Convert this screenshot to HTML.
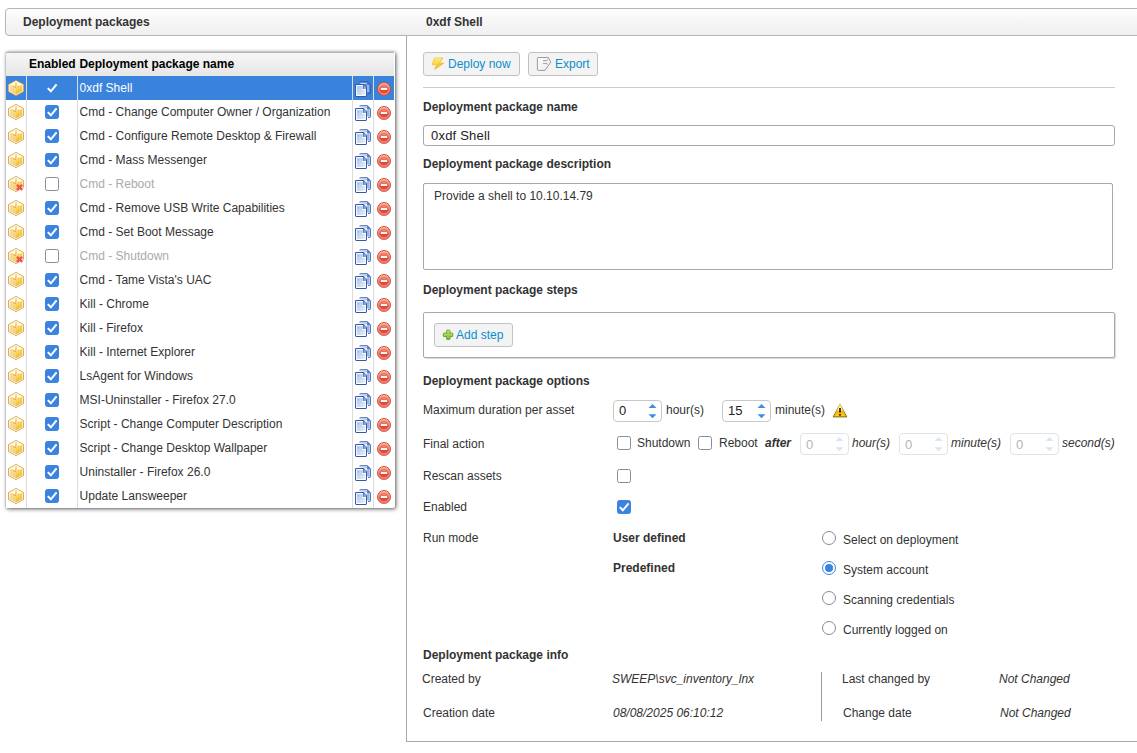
<!DOCTYPE html><html><head><meta charset="utf-8"><style>
html,body{margin:0;padding:0;background:#fff;width:1137px;height:753px;overflow:hidden;position:relative}
body{font-family:"Liberation Sans",sans-serif;font-size:12px;color:#333}
.t{position:absolute;white-space:nowrap;line-height:14px;font-size:12px}
.b{font-weight:bold}.i{font-style:italic}
.h{color:#333}
.lnk{color:#0b8ecb}
#hdr{position:absolute;left:5px;top:8px;width:1140px;height:26px;border:1px solid #b4b4b4;border-radius:4px 0 0 4px;background:linear-gradient(#fdfdfd,#efefef)}
#tbl{position:absolute;left:6px;top:52px;width:389px;height:456px;background:#fff;box-shadow:1px 1px 4px rgba(0,0,0,.6),0 0 2px rgba(0,0,0,.3);border-radius:0 0 2px 0}
#thd{position:absolute;left:0;top:0;width:388px;height:24px;background:linear-gradient(#f6f6f6,#e6e6e6);border-top:1px solid #b4b4b4;box-sizing:border-box}
.row{position:absolute;left:0;width:388px;height:24px}
.row.sel{background:#3a83dc}
.vl{position:absolute;top:24px;width:1px;height:432px;background:#dcdcdc}
.ic{position:absolute;width:16px;height:16px}
.ic svg{display:block}
.chk{position:absolute;width:12px;height:12px;border:1px solid #8a8a98;border-radius:2.5px;background:#fff}
.chk.on{background:#3b83de;border-color:#3b83de}
.chk svg{position:absolute;left:-1px;top:-1px}
.chk.nb svg{left:0;top:0}
#rpl{position:absolute;left:406px;top:36px;width:1px;height:706px;background:#aaa}
#rpb{position:absolute;left:406px;top:741px;width:740px;height:1px;background:#aaa}
.btn{position:absolute;height:22px;border:1px solid #c2c2c2;border-radius:3px;background:#f3f3f3}
.inp{position:absolute;border:1px solid #a9a9a9;border-radius:3px;background:#fff}
.num{position:absolute;width:47px;height:20px;border:1px solid #c8c8c8;border-radius:4px;background:#fff}
.rad{position:absolute;width:12px;height:12px;border:1px solid #8a8a98;border-radius:50%;background:#fff}
.rad.on{border-color:#3b83de}
.rad.on::after{content:"";position:absolute;left:2px;top:2px;width:8px;height:8px;border-radius:50%;background:#3b83de}
</style></head><body><div id="hdr"></div>
<div class="t b h" style="left:23px;top:15px;">Deployment packages</div>
<div class="t b h" style="left:426px;top:15px;">0xdf Shell</div>
<div id="tbl">
<div id="thd"></div>
<div class="t b" style="left:23px;top:5px;color:#000">Enabled</div>
<div class="t b" style="left:73.4px;top:5px;color:#000">Deployment package name</div>
<div class="row sel" style="top:24px">
<div class="ic" style="left:2px;top:4px"><svg width="16" height="16" viewBox="0 0 16 16"><defs><linearGradient id="bxl" x1="0" y1="0" x2="0.3" y2="1"><stop offset="0" stop-color="#fdf0c6"/><stop offset="1" stop-color="#f2cb6c"/></linearGradient><linearGradient id="bxr" x1="0" y1="0" x2="0.2" y2="1"><stop offset="0" stop-color="#fbe6a0"/><stop offset="0.35" stop-color="#f8d35e"/><stop offset="1" stop-color="#ecb334"/></linearGradient><linearGradient id="bxf" x1="0" y1="0" x2="1" y2="0"><stop offset="0" stop-color="#f6dc9a"/><stop offset="1" stop-color="#e2ad48"/></linearGradient></defs>
<path d="M8 0.5 L15.5 4.5 L15.5 11.6 L8 15.5 L0.5 11.6 L0.5 4.5 Z" fill="url(#bxl)" stroke="#d6a140" stroke-width="0.95"/>
<path d="M8 6.4 L14.6 5.1 L14.6 11.1 L8 14.6 Z" fill="url(#bxr)"/>
<path d="M1.5 4.9 L8 1.4 L14.5 4.9 L8 6.5 Z" fill="#fff6dc"/>
<path d="M2.8 5 L8 6.5 L8 8.2 L3.2 6.4 Z" fill="url(#bxf)" opacity="0.9"/>
<path d="M9 6.3 L14.4 5.2 L14.4 6.2 L9 7.3 Z" fill="#f1c050" opacity="0.6"/>
<path d="M8 2.6 L8 6.6" stroke="#d9a646" stroke-width="0.9"/>
<path d="M8 1.35 L14.7 4.95 L14.7 11.15 L8 14.65 L1.3 11.15 L1.3 4.95 Z" fill="none" stroke="#fffaf0" stroke-width="0.7" opacity="0.95"/>
</svg></div>
<div class="chk nb" style="left:39px;top:5px;background:none;border:none"><svg width="14" height="14" viewBox="0 0 14 14"><path d="M2.8 7.1 L5.9 10.3 L11.6 3.3" stroke="#fff" stroke-width="2" fill="none"/></svg></div>
<div class="t" style="left:73.6px;top:5px;color:#fff">0xdf Shell</div>
<div class="ic" style="left:349px;top:5px"><svg width="16" height="16" viewBox="0 0 16 16"><defs><linearGradient id="cpg" x1="0" y1="0" x2="1" y2="1"><stop offset="0" stop-color="#a8c4ec"/><stop offset="1" stop-color="#e8f0fb"/></linearGradient><linearGradient id="cpb" x1="0" y1="0" x2="1" y2="0"><stop offset="0" stop-color="#dbe7f8"/><stop offset="1" stop-color="#8fb0e0"/></linearGradient></defs>
<path d="M4.7 1.6 Q4.7 0.8 5.5 0.8 L12.3 0.8 L15.3 3.8 L15.3 11.6 Q15.3 12.3 14.6 12.3 L13 12.3" fill="none" stroke="#3458aa" stroke-width="1.05" stroke-linejoin="round"/>
<path d="M5.5 1.8 L12 1.8 L14.3 4.1 L14.3 11.3 L11.9 11.3 L11.9 3.3 L5.5 3.3 Z" fill="url(#cpb)"/>
<path d="M12.2 1 L12.2 3.9 L15.1 3.9 Z" fill="#4f76c0"/>
<path d="M1.4 3.5 L8.5 3.5 L11.5 6.5 L11.5 14.5 Q11.5 15.4 10.6 15.4 L1.4 15.4 Q0.5 15.4 0.5 14.5 L0.5 4.4 Q0.5 3.5 1.4 3.5 Z" fill="#fff" stroke="#3458aa" stroke-width="1.05" stroke-linejoin="round"/>
<path d="M1.9 5 L7.5 5 L7.5 8.7 L10.1 8.7 L10.1 14 L1.9 14 Z" fill="url(#cpg)"/>
<path d="M8.7 4 L11 6.3 L11 7.9 L8.7 7.9 Z" fill="#8aaadc"/>
<path d="M8.35 3.6 L8.35 7.9" stroke="#3458aa" stroke-width="0.9"/>
</svg></div>
<div class="ic" style="left:370px;top:5px"><svg width="16" height="16" viewBox="0 0 16 16"><defs><linearGradient id="dlg" x1="0" y1="0" x2="0" y2="1"><stop offset="0" stop-color="#f7a08e"/><stop offset="0.45" stop-color="#ea6450"/><stop offset="0.6" stop-color="#e24836"/><stop offset="1" stop-color="#e65a48"/></linearGradient></defs>
<circle cx="8" cy="7.95" r="6.5" fill="url(#dlg)" stroke="#cf4636" stroke-width="0.9"/>
<circle cx="8" cy="7.95" r="5.3" fill="none" stroke="#ffd2c6" stroke-width="0.75" opacity="0.85"/>
<rect x="4.9" y="6.95" width="6.2" height="2.05" fill="#fff"/>
</svg></div>
</div>
<div class="row" style="top:48px">
<div class="ic" style="left:2px;top:4px"><svg width="16" height="16" viewBox="0 0 16 16"><defs><linearGradient id="bxl" x1="0" y1="0" x2="0.3" y2="1"><stop offset="0" stop-color="#fdf0c6"/><stop offset="1" stop-color="#f2cb6c"/></linearGradient><linearGradient id="bxr" x1="0" y1="0" x2="0.2" y2="1"><stop offset="0" stop-color="#fbe6a0"/><stop offset="0.35" stop-color="#f8d35e"/><stop offset="1" stop-color="#ecb334"/></linearGradient><linearGradient id="bxf" x1="0" y1="0" x2="1" y2="0"><stop offset="0" stop-color="#f6dc9a"/><stop offset="1" stop-color="#e2ad48"/></linearGradient></defs>
<path d="M8 0.5 L15.5 4.5 L15.5 11.6 L8 15.5 L0.5 11.6 L0.5 4.5 Z" fill="url(#bxl)" stroke="#d6a140" stroke-width="0.95"/>
<path d="M8 6.4 L14.6 5.1 L14.6 11.1 L8 14.6 Z" fill="url(#bxr)"/>
<path d="M1.5 4.9 L8 1.4 L14.5 4.9 L8 6.5 Z" fill="#fff6dc"/>
<path d="M2.8 5 L8 6.5 L8 8.2 L3.2 6.4 Z" fill="url(#bxf)" opacity="0.9"/>
<path d="M9 6.3 L14.4 5.2 L14.4 6.2 L9 7.3 Z" fill="#f1c050" opacity="0.6"/>
<path d="M8 2.6 L8 6.6" stroke="#d9a646" stroke-width="0.9"/>
<path d="M8 1.35 L14.7 4.95 L14.7 11.15 L8 14.65 L1.3 11.15 L1.3 4.95 Z" fill="none" stroke="#fffaf0" stroke-width="0.7" opacity="0.95"/>
</svg></div>
<div class="chk on" style="left:39px;top:5px"><svg width="14" height="14" viewBox="0 0 14 14"><path d="M2.8 7.1 L5.9 10.3 L11.6 3.3" stroke="#fff" stroke-width="2" fill="none"/></svg></div>
<div class="t" style="left:73.6px;top:5px;color:#333">Cmd - Change Computer Owner / Organization</div>
<div class="ic" style="left:349px;top:5px"><svg width="16" height="16" viewBox="0 0 16 16"><defs><linearGradient id="cpg" x1="0" y1="0" x2="1" y2="1"><stop offset="0" stop-color="#a8c4ec"/><stop offset="1" stop-color="#e8f0fb"/></linearGradient><linearGradient id="cpb" x1="0" y1="0" x2="1" y2="0"><stop offset="0" stop-color="#dbe7f8"/><stop offset="1" stop-color="#8fb0e0"/></linearGradient></defs>
<path d="M4.7 1.6 Q4.7 0.8 5.5 0.8 L12.3 0.8 L15.3 3.8 L15.3 11.6 Q15.3 12.3 14.6 12.3 L13 12.3" fill="none" stroke="#3458aa" stroke-width="1.05" stroke-linejoin="round"/>
<path d="M5.5 1.8 L12 1.8 L14.3 4.1 L14.3 11.3 L11.9 11.3 L11.9 3.3 L5.5 3.3 Z" fill="url(#cpb)"/>
<path d="M12.2 1 L12.2 3.9 L15.1 3.9 Z" fill="#4f76c0"/>
<path d="M1.4 3.5 L8.5 3.5 L11.5 6.5 L11.5 14.5 Q11.5 15.4 10.6 15.4 L1.4 15.4 Q0.5 15.4 0.5 14.5 L0.5 4.4 Q0.5 3.5 1.4 3.5 Z" fill="#fff" stroke="#3458aa" stroke-width="1.05" stroke-linejoin="round"/>
<path d="M1.9 5 L7.5 5 L7.5 8.7 L10.1 8.7 L10.1 14 L1.9 14 Z" fill="url(#cpg)"/>
<path d="M8.7 4 L11 6.3 L11 7.9 L8.7 7.9 Z" fill="#8aaadc"/>
<path d="M8.35 3.6 L8.35 7.9" stroke="#3458aa" stroke-width="0.9"/>
</svg></div>
<div class="ic" style="left:370px;top:5px"><svg width="16" height="16" viewBox="0 0 16 16"><defs><linearGradient id="dlg" x1="0" y1="0" x2="0" y2="1"><stop offset="0" stop-color="#f7a08e"/><stop offset="0.45" stop-color="#ea6450"/><stop offset="0.6" stop-color="#e24836"/><stop offset="1" stop-color="#e65a48"/></linearGradient></defs>
<circle cx="8" cy="7.95" r="6.5" fill="url(#dlg)" stroke="#cf4636" stroke-width="0.9"/>
<circle cx="8" cy="7.95" r="5.3" fill="none" stroke="#ffd2c6" stroke-width="0.75" opacity="0.85"/>
<rect x="4.9" y="6.95" width="6.2" height="2.05" fill="#fff"/>
</svg></div>
</div>
<div class="row" style="top:72px">
<div class="ic" style="left:2px;top:4px"><svg width="16" height="16" viewBox="0 0 16 16"><defs><linearGradient id="bxl" x1="0" y1="0" x2="0.3" y2="1"><stop offset="0" stop-color="#fdf0c6"/><stop offset="1" stop-color="#f2cb6c"/></linearGradient><linearGradient id="bxr" x1="0" y1="0" x2="0.2" y2="1"><stop offset="0" stop-color="#fbe6a0"/><stop offset="0.35" stop-color="#f8d35e"/><stop offset="1" stop-color="#ecb334"/></linearGradient><linearGradient id="bxf" x1="0" y1="0" x2="1" y2="0"><stop offset="0" stop-color="#f6dc9a"/><stop offset="1" stop-color="#e2ad48"/></linearGradient></defs>
<path d="M8 0.5 L15.5 4.5 L15.5 11.6 L8 15.5 L0.5 11.6 L0.5 4.5 Z" fill="url(#bxl)" stroke="#d6a140" stroke-width="0.95"/>
<path d="M8 6.4 L14.6 5.1 L14.6 11.1 L8 14.6 Z" fill="url(#bxr)"/>
<path d="M1.5 4.9 L8 1.4 L14.5 4.9 L8 6.5 Z" fill="#fff6dc"/>
<path d="M2.8 5 L8 6.5 L8 8.2 L3.2 6.4 Z" fill="url(#bxf)" opacity="0.9"/>
<path d="M9 6.3 L14.4 5.2 L14.4 6.2 L9 7.3 Z" fill="#f1c050" opacity="0.6"/>
<path d="M8 2.6 L8 6.6" stroke="#d9a646" stroke-width="0.9"/>
<path d="M8 1.35 L14.7 4.95 L14.7 11.15 L8 14.65 L1.3 11.15 L1.3 4.95 Z" fill="none" stroke="#fffaf0" stroke-width="0.7" opacity="0.95"/>
</svg></div>
<div class="chk on" style="left:39px;top:5px"><svg width="14" height="14" viewBox="0 0 14 14"><path d="M2.8 7.1 L5.9 10.3 L11.6 3.3" stroke="#fff" stroke-width="2" fill="none"/></svg></div>
<div class="t" style="left:73.6px;top:5px;color:#333">Cmd - Configure Remote Desktop &amp; Firewall</div>
<div class="ic" style="left:349px;top:5px"><svg width="16" height="16" viewBox="0 0 16 16"><defs><linearGradient id="cpg" x1="0" y1="0" x2="1" y2="1"><stop offset="0" stop-color="#a8c4ec"/><stop offset="1" stop-color="#e8f0fb"/></linearGradient><linearGradient id="cpb" x1="0" y1="0" x2="1" y2="0"><stop offset="0" stop-color="#dbe7f8"/><stop offset="1" stop-color="#8fb0e0"/></linearGradient></defs>
<path d="M4.7 1.6 Q4.7 0.8 5.5 0.8 L12.3 0.8 L15.3 3.8 L15.3 11.6 Q15.3 12.3 14.6 12.3 L13 12.3" fill="none" stroke="#3458aa" stroke-width="1.05" stroke-linejoin="round"/>
<path d="M5.5 1.8 L12 1.8 L14.3 4.1 L14.3 11.3 L11.9 11.3 L11.9 3.3 L5.5 3.3 Z" fill="url(#cpb)"/>
<path d="M12.2 1 L12.2 3.9 L15.1 3.9 Z" fill="#4f76c0"/>
<path d="M1.4 3.5 L8.5 3.5 L11.5 6.5 L11.5 14.5 Q11.5 15.4 10.6 15.4 L1.4 15.4 Q0.5 15.4 0.5 14.5 L0.5 4.4 Q0.5 3.5 1.4 3.5 Z" fill="#fff" stroke="#3458aa" stroke-width="1.05" stroke-linejoin="round"/>
<path d="M1.9 5 L7.5 5 L7.5 8.7 L10.1 8.7 L10.1 14 L1.9 14 Z" fill="url(#cpg)"/>
<path d="M8.7 4 L11 6.3 L11 7.9 L8.7 7.9 Z" fill="#8aaadc"/>
<path d="M8.35 3.6 L8.35 7.9" stroke="#3458aa" stroke-width="0.9"/>
</svg></div>
<div class="ic" style="left:370px;top:5px"><svg width="16" height="16" viewBox="0 0 16 16"><defs><linearGradient id="dlg" x1="0" y1="0" x2="0" y2="1"><stop offset="0" stop-color="#f7a08e"/><stop offset="0.45" stop-color="#ea6450"/><stop offset="0.6" stop-color="#e24836"/><stop offset="1" stop-color="#e65a48"/></linearGradient></defs>
<circle cx="8" cy="7.95" r="6.5" fill="url(#dlg)" stroke="#cf4636" stroke-width="0.9"/>
<circle cx="8" cy="7.95" r="5.3" fill="none" stroke="#ffd2c6" stroke-width="0.75" opacity="0.85"/>
<rect x="4.9" y="6.95" width="6.2" height="2.05" fill="#fff"/>
</svg></div>
</div>
<div class="row" style="top:96px">
<div class="ic" style="left:2px;top:4px"><svg width="16" height="16" viewBox="0 0 16 16"><defs><linearGradient id="bxl" x1="0" y1="0" x2="0.3" y2="1"><stop offset="0" stop-color="#fdf0c6"/><stop offset="1" stop-color="#f2cb6c"/></linearGradient><linearGradient id="bxr" x1="0" y1="0" x2="0.2" y2="1"><stop offset="0" stop-color="#fbe6a0"/><stop offset="0.35" stop-color="#f8d35e"/><stop offset="1" stop-color="#ecb334"/></linearGradient><linearGradient id="bxf" x1="0" y1="0" x2="1" y2="0"><stop offset="0" stop-color="#f6dc9a"/><stop offset="1" stop-color="#e2ad48"/></linearGradient></defs>
<path d="M8 0.5 L15.5 4.5 L15.5 11.6 L8 15.5 L0.5 11.6 L0.5 4.5 Z" fill="url(#bxl)" stroke="#d6a140" stroke-width="0.95"/>
<path d="M8 6.4 L14.6 5.1 L14.6 11.1 L8 14.6 Z" fill="url(#bxr)"/>
<path d="M1.5 4.9 L8 1.4 L14.5 4.9 L8 6.5 Z" fill="#fff6dc"/>
<path d="M2.8 5 L8 6.5 L8 8.2 L3.2 6.4 Z" fill="url(#bxf)" opacity="0.9"/>
<path d="M9 6.3 L14.4 5.2 L14.4 6.2 L9 7.3 Z" fill="#f1c050" opacity="0.6"/>
<path d="M8 2.6 L8 6.6" stroke="#d9a646" stroke-width="0.9"/>
<path d="M8 1.35 L14.7 4.95 L14.7 11.15 L8 14.65 L1.3 11.15 L1.3 4.95 Z" fill="none" stroke="#fffaf0" stroke-width="0.7" opacity="0.95"/>
</svg></div>
<div class="chk on" style="left:39px;top:5px"><svg width="14" height="14" viewBox="0 0 14 14"><path d="M2.8 7.1 L5.9 10.3 L11.6 3.3" stroke="#fff" stroke-width="2" fill="none"/></svg></div>
<div class="t" style="left:73.6px;top:5px;color:#333">Cmd - Mass Messenger</div>
<div class="ic" style="left:349px;top:5px"><svg width="16" height="16" viewBox="0 0 16 16"><defs><linearGradient id="cpg" x1="0" y1="0" x2="1" y2="1"><stop offset="0" stop-color="#a8c4ec"/><stop offset="1" stop-color="#e8f0fb"/></linearGradient><linearGradient id="cpb" x1="0" y1="0" x2="1" y2="0"><stop offset="0" stop-color="#dbe7f8"/><stop offset="1" stop-color="#8fb0e0"/></linearGradient></defs>
<path d="M4.7 1.6 Q4.7 0.8 5.5 0.8 L12.3 0.8 L15.3 3.8 L15.3 11.6 Q15.3 12.3 14.6 12.3 L13 12.3" fill="none" stroke="#3458aa" stroke-width="1.05" stroke-linejoin="round"/>
<path d="M5.5 1.8 L12 1.8 L14.3 4.1 L14.3 11.3 L11.9 11.3 L11.9 3.3 L5.5 3.3 Z" fill="url(#cpb)"/>
<path d="M12.2 1 L12.2 3.9 L15.1 3.9 Z" fill="#4f76c0"/>
<path d="M1.4 3.5 L8.5 3.5 L11.5 6.5 L11.5 14.5 Q11.5 15.4 10.6 15.4 L1.4 15.4 Q0.5 15.4 0.5 14.5 L0.5 4.4 Q0.5 3.5 1.4 3.5 Z" fill="#fff" stroke="#3458aa" stroke-width="1.05" stroke-linejoin="round"/>
<path d="M1.9 5 L7.5 5 L7.5 8.7 L10.1 8.7 L10.1 14 L1.9 14 Z" fill="url(#cpg)"/>
<path d="M8.7 4 L11 6.3 L11 7.9 L8.7 7.9 Z" fill="#8aaadc"/>
<path d="M8.35 3.6 L8.35 7.9" stroke="#3458aa" stroke-width="0.9"/>
</svg></div>
<div class="ic" style="left:370px;top:5px"><svg width="16" height="16" viewBox="0 0 16 16"><defs><linearGradient id="dlg" x1="0" y1="0" x2="0" y2="1"><stop offset="0" stop-color="#f7a08e"/><stop offset="0.45" stop-color="#ea6450"/><stop offset="0.6" stop-color="#e24836"/><stop offset="1" stop-color="#e65a48"/></linearGradient></defs>
<circle cx="8" cy="7.95" r="6.5" fill="url(#dlg)" stroke="#cf4636" stroke-width="0.9"/>
<circle cx="8" cy="7.95" r="5.3" fill="none" stroke="#ffd2c6" stroke-width="0.75" opacity="0.85"/>
<rect x="4.9" y="6.95" width="6.2" height="2.05" fill="#fff"/>
</svg></div>
</div>
<div class="row" style="top:120px">
<div class="ic" style="left:2px;top:4px"><svg width="16" height="16" viewBox="0 0 16 16"><defs><linearGradient id="bxl" x1="0" y1="0" x2="0.3" y2="1"><stop offset="0" stop-color="#fdf0c6"/><stop offset="1" stop-color="#f2cb6c"/></linearGradient><linearGradient id="bxr" x1="0" y1="0" x2="0.2" y2="1"><stop offset="0" stop-color="#fbe6a0"/><stop offset="0.35" stop-color="#f8d35e"/><stop offset="1" stop-color="#ecb334"/></linearGradient><linearGradient id="bxf" x1="0" y1="0" x2="1" y2="0"><stop offset="0" stop-color="#f6dc9a"/><stop offset="1" stop-color="#e2ad48"/></linearGradient></defs>
<path d="M8 0.5 L15.5 4.5 L15.5 11.6 L8 15.5 L0.5 11.6 L0.5 4.5 Z" fill="url(#bxl)" stroke="#d6a140" stroke-width="0.95"/>
<path d="M8 6.4 L14.6 5.1 L14.6 11.1 L8 14.6 Z" fill="url(#bxr)"/>
<path d="M1.5 4.9 L8 1.4 L14.5 4.9 L8 6.5 Z" fill="#fff6dc"/>
<path d="M2.8 5 L8 6.5 L8 8.2 L3.2 6.4 Z" fill="url(#bxf)" opacity="0.9"/>
<path d="M9 6.3 L14.4 5.2 L14.4 6.2 L9 7.3 Z" fill="#f1c050" opacity="0.6"/>
<path d="M8 2.6 L8 6.6" stroke="#d9a646" stroke-width="0.9"/>
<path d="M8 1.35 L14.7 4.95 L14.7 11.15 L8 14.65 L1.3 11.15 L1.3 4.95 Z" fill="none" stroke="#fffaf0" stroke-width="0.7" opacity="0.95"/>
</svg><svg width="16" height="16" viewBox="0 0 16 16" style="position:absolute;left:0;top:0"><path d="M9 8.8 L14.2 14 M14.2 8.8 L9 14" stroke="#f04a5a" stroke-width="2"/></svg></div>
<div class="chk" style="left:39px;top:5px"></div>
<div class="t" style="left:73.6px;top:5px;color:#aaa">Cmd - Reboot</div>
<div class="ic" style="left:349px;top:5px"><svg width="16" height="16" viewBox="0 0 16 16"><defs><linearGradient id="cpg" x1="0" y1="0" x2="1" y2="1"><stop offset="0" stop-color="#a8c4ec"/><stop offset="1" stop-color="#e8f0fb"/></linearGradient><linearGradient id="cpb" x1="0" y1="0" x2="1" y2="0"><stop offset="0" stop-color="#dbe7f8"/><stop offset="1" stop-color="#8fb0e0"/></linearGradient></defs>
<path d="M4.7 1.6 Q4.7 0.8 5.5 0.8 L12.3 0.8 L15.3 3.8 L15.3 11.6 Q15.3 12.3 14.6 12.3 L13 12.3" fill="none" stroke="#3458aa" stroke-width="1.05" stroke-linejoin="round"/>
<path d="M5.5 1.8 L12 1.8 L14.3 4.1 L14.3 11.3 L11.9 11.3 L11.9 3.3 L5.5 3.3 Z" fill="url(#cpb)"/>
<path d="M12.2 1 L12.2 3.9 L15.1 3.9 Z" fill="#4f76c0"/>
<path d="M1.4 3.5 L8.5 3.5 L11.5 6.5 L11.5 14.5 Q11.5 15.4 10.6 15.4 L1.4 15.4 Q0.5 15.4 0.5 14.5 L0.5 4.4 Q0.5 3.5 1.4 3.5 Z" fill="#fff" stroke="#3458aa" stroke-width="1.05" stroke-linejoin="round"/>
<path d="M1.9 5 L7.5 5 L7.5 8.7 L10.1 8.7 L10.1 14 L1.9 14 Z" fill="url(#cpg)"/>
<path d="M8.7 4 L11 6.3 L11 7.9 L8.7 7.9 Z" fill="#8aaadc"/>
<path d="M8.35 3.6 L8.35 7.9" stroke="#3458aa" stroke-width="0.9"/>
</svg></div>
<div class="ic" style="left:370px;top:5px"><svg width="16" height="16" viewBox="0 0 16 16"><defs><linearGradient id="dlg" x1="0" y1="0" x2="0" y2="1"><stop offset="0" stop-color="#f7a08e"/><stop offset="0.45" stop-color="#ea6450"/><stop offset="0.6" stop-color="#e24836"/><stop offset="1" stop-color="#e65a48"/></linearGradient></defs>
<circle cx="8" cy="7.95" r="6.5" fill="url(#dlg)" stroke="#cf4636" stroke-width="0.9"/>
<circle cx="8" cy="7.95" r="5.3" fill="none" stroke="#ffd2c6" stroke-width="0.75" opacity="0.85"/>
<rect x="4.9" y="6.95" width="6.2" height="2.05" fill="#fff"/>
</svg></div>
</div>
<div class="row" style="top:144px">
<div class="ic" style="left:2px;top:4px"><svg width="16" height="16" viewBox="0 0 16 16"><defs><linearGradient id="bxl" x1="0" y1="0" x2="0.3" y2="1"><stop offset="0" stop-color="#fdf0c6"/><stop offset="1" stop-color="#f2cb6c"/></linearGradient><linearGradient id="bxr" x1="0" y1="0" x2="0.2" y2="1"><stop offset="0" stop-color="#fbe6a0"/><stop offset="0.35" stop-color="#f8d35e"/><stop offset="1" stop-color="#ecb334"/></linearGradient><linearGradient id="bxf" x1="0" y1="0" x2="1" y2="0"><stop offset="0" stop-color="#f6dc9a"/><stop offset="1" stop-color="#e2ad48"/></linearGradient></defs>
<path d="M8 0.5 L15.5 4.5 L15.5 11.6 L8 15.5 L0.5 11.6 L0.5 4.5 Z" fill="url(#bxl)" stroke="#d6a140" stroke-width="0.95"/>
<path d="M8 6.4 L14.6 5.1 L14.6 11.1 L8 14.6 Z" fill="url(#bxr)"/>
<path d="M1.5 4.9 L8 1.4 L14.5 4.9 L8 6.5 Z" fill="#fff6dc"/>
<path d="M2.8 5 L8 6.5 L8 8.2 L3.2 6.4 Z" fill="url(#bxf)" opacity="0.9"/>
<path d="M9 6.3 L14.4 5.2 L14.4 6.2 L9 7.3 Z" fill="#f1c050" opacity="0.6"/>
<path d="M8 2.6 L8 6.6" stroke="#d9a646" stroke-width="0.9"/>
<path d="M8 1.35 L14.7 4.95 L14.7 11.15 L8 14.65 L1.3 11.15 L1.3 4.95 Z" fill="none" stroke="#fffaf0" stroke-width="0.7" opacity="0.95"/>
</svg></div>
<div class="chk on" style="left:39px;top:5px"><svg width="14" height="14" viewBox="0 0 14 14"><path d="M2.8 7.1 L5.9 10.3 L11.6 3.3" stroke="#fff" stroke-width="2" fill="none"/></svg></div>
<div class="t" style="left:73.6px;top:5px;color:#333">Cmd - Remove USB Write Capabilities</div>
<div class="ic" style="left:349px;top:5px"><svg width="16" height="16" viewBox="0 0 16 16"><defs><linearGradient id="cpg" x1="0" y1="0" x2="1" y2="1"><stop offset="0" stop-color="#a8c4ec"/><stop offset="1" stop-color="#e8f0fb"/></linearGradient><linearGradient id="cpb" x1="0" y1="0" x2="1" y2="0"><stop offset="0" stop-color="#dbe7f8"/><stop offset="1" stop-color="#8fb0e0"/></linearGradient></defs>
<path d="M4.7 1.6 Q4.7 0.8 5.5 0.8 L12.3 0.8 L15.3 3.8 L15.3 11.6 Q15.3 12.3 14.6 12.3 L13 12.3" fill="none" stroke="#3458aa" stroke-width="1.05" stroke-linejoin="round"/>
<path d="M5.5 1.8 L12 1.8 L14.3 4.1 L14.3 11.3 L11.9 11.3 L11.9 3.3 L5.5 3.3 Z" fill="url(#cpb)"/>
<path d="M12.2 1 L12.2 3.9 L15.1 3.9 Z" fill="#4f76c0"/>
<path d="M1.4 3.5 L8.5 3.5 L11.5 6.5 L11.5 14.5 Q11.5 15.4 10.6 15.4 L1.4 15.4 Q0.5 15.4 0.5 14.5 L0.5 4.4 Q0.5 3.5 1.4 3.5 Z" fill="#fff" stroke="#3458aa" stroke-width="1.05" stroke-linejoin="round"/>
<path d="M1.9 5 L7.5 5 L7.5 8.7 L10.1 8.7 L10.1 14 L1.9 14 Z" fill="url(#cpg)"/>
<path d="M8.7 4 L11 6.3 L11 7.9 L8.7 7.9 Z" fill="#8aaadc"/>
<path d="M8.35 3.6 L8.35 7.9" stroke="#3458aa" stroke-width="0.9"/>
</svg></div>
<div class="ic" style="left:370px;top:5px"><svg width="16" height="16" viewBox="0 0 16 16"><defs><linearGradient id="dlg" x1="0" y1="0" x2="0" y2="1"><stop offset="0" stop-color="#f7a08e"/><stop offset="0.45" stop-color="#ea6450"/><stop offset="0.6" stop-color="#e24836"/><stop offset="1" stop-color="#e65a48"/></linearGradient></defs>
<circle cx="8" cy="7.95" r="6.5" fill="url(#dlg)" stroke="#cf4636" stroke-width="0.9"/>
<circle cx="8" cy="7.95" r="5.3" fill="none" stroke="#ffd2c6" stroke-width="0.75" opacity="0.85"/>
<rect x="4.9" y="6.95" width="6.2" height="2.05" fill="#fff"/>
</svg></div>
</div>
<div class="row" style="top:168px">
<div class="ic" style="left:2px;top:4px"><svg width="16" height="16" viewBox="0 0 16 16"><defs><linearGradient id="bxl" x1="0" y1="0" x2="0.3" y2="1"><stop offset="0" stop-color="#fdf0c6"/><stop offset="1" stop-color="#f2cb6c"/></linearGradient><linearGradient id="bxr" x1="0" y1="0" x2="0.2" y2="1"><stop offset="0" stop-color="#fbe6a0"/><stop offset="0.35" stop-color="#f8d35e"/><stop offset="1" stop-color="#ecb334"/></linearGradient><linearGradient id="bxf" x1="0" y1="0" x2="1" y2="0"><stop offset="0" stop-color="#f6dc9a"/><stop offset="1" stop-color="#e2ad48"/></linearGradient></defs>
<path d="M8 0.5 L15.5 4.5 L15.5 11.6 L8 15.5 L0.5 11.6 L0.5 4.5 Z" fill="url(#bxl)" stroke="#d6a140" stroke-width="0.95"/>
<path d="M8 6.4 L14.6 5.1 L14.6 11.1 L8 14.6 Z" fill="url(#bxr)"/>
<path d="M1.5 4.9 L8 1.4 L14.5 4.9 L8 6.5 Z" fill="#fff6dc"/>
<path d="M2.8 5 L8 6.5 L8 8.2 L3.2 6.4 Z" fill="url(#bxf)" opacity="0.9"/>
<path d="M9 6.3 L14.4 5.2 L14.4 6.2 L9 7.3 Z" fill="#f1c050" opacity="0.6"/>
<path d="M8 2.6 L8 6.6" stroke="#d9a646" stroke-width="0.9"/>
<path d="M8 1.35 L14.7 4.95 L14.7 11.15 L8 14.65 L1.3 11.15 L1.3 4.95 Z" fill="none" stroke="#fffaf0" stroke-width="0.7" opacity="0.95"/>
</svg></div>
<div class="chk on" style="left:39px;top:5px"><svg width="14" height="14" viewBox="0 0 14 14"><path d="M2.8 7.1 L5.9 10.3 L11.6 3.3" stroke="#fff" stroke-width="2" fill="none"/></svg></div>
<div class="t" style="left:73.6px;top:5px;color:#333">Cmd - Set Boot Message</div>
<div class="ic" style="left:349px;top:5px"><svg width="16" height="16" viewBox="0 0 16 16"><defs><linearGradient id="cpg" x1="0" y1="0" x2="1" y2="1"><stop offset="0" stop-color="#a8c4ec"/><stop offset="1" stop-color="#e8f0fb"/></linearGradient><linearGradient id="cpb" x1="0" y1="0" x2="1" y2="0"><stop offset="0" stop-color="#dbe7f8"/><stop offset="1" stop-color="#8fb0e0"/></linearGradient></defs>
<path d="M4.7 1.6 Q4.7 0.8 5.5 0.8 L12.3 0.8 L15.3 3.8 L15.3 11.6 Q15.3 12.3 14.6 12.3 L13 12.3" fill="none" stroke="#3458aa" stroke-width="1.05" stroke-linejoin="round"/>
<path d="M5.5 1.8 L12 1.8 L14.3 4.1 L14.3 11.3 L11.9 11.3 L11.9 3.3 L5.5 3.3 Z" fill="url(#cpb)"/>
<path d="M12.2 1 L12.2 3.9 L15.1 3.9 Z" fill="#4f76c0"/>
<path d="M1.4 3.5 L8.5 3.5 L11.5 6.5 L11.5 14.5 Q11.5 15.4 10.6 15.4 L1.4 15.4 Q0.5 15.4 0.5 14.5 L0.5 4.4 Q0.5 3.5 1.4 3.5 Z" fill="#fff" stroke="#3458aa" stroke-width="1.05" stroke-linejoin="round"/>
<path d="M1.9 5 L7.5 5 L7.5 8.7 L10.1 8.7 L10.1 14 L1.9 14 Z" fill="url(#cpg)"/>
<path d="M8.7 4 L11 6.3 L11 7.9 L8.7 7.9 Z" fill="#8aaadc"/>
<path d="M8.35 3.6 L8.35 7.9" stroke="#3458aa" stroke-width="0.9"/>
</svg></div>
<div class="ic" style="left:370px;top:5px"><svg width="16" height="16" viewBox="0 0 16 16"><defs><linearGradient id="dlg" x1="0" y1="0" x2="0" y2="1"><stop offset="0" stop-color="#f7a08e"/><stop offset="0.45" stop-color="#ea6450"/><stop offset="0.6" stop-color="#e24836"/><stop offset="1" stop-color="#e65a48"/></linearGradient></defs>
<circle cx="8" cy="7.95" r="6.5" fill="url(#dlg)" stroke="#cf4636" stroke-width="0.9"/>
<circle cx="8" cy="7.95" r="5.3" fill="none" stroke="#ffd2c6" stroke-width="0.75" opacity="0.85"/>
<rect x="4.9" y="6.95" width="6.2" height="2.05" fill="#fff"/>
</svg></div>
</div>
<div class="row" style="top:192px">
<div class="ic" style="left:2px;top:4px"><svg width="16" height="16" viewBox="0 0 16 16"><defs><linearGradient id="bxl" x1="0" y1="0" x2="0.3" y2="1"><stop offset="0" stop-color="#fdf0c6"/><stop offset="1" stop-color="#f2cb6c"/></linearGradient><linearGradient id="bxr" x1="0" y1="0" x2="0.2" y2="1"><stop offset="0" stop-color="#fbe6a0"/><stop offset="0.35" stop-color="#f8d35e"/><stop offset="1" stop-color="#ecb334"/></linearGradient><linearGradient id="bxf" x1="0" y1="0" x2="1" y2="0"><stop offset="0" stop-color="#f6dc9a"/><stop offset="1" stop-color="#e2ad48"/></linearGradient></defs>
<path d="M8 0.5 L15.5 4.5 L15.5 11.6 L8 15.5 L0.5 11.6 L0.5 4.5 Z" fill="url(#bxl)" stroke="#d6a140" stroke-width="0.95"/>
<path d="M8 6.4 L14.6 5.1 L14.6 11.1 L8 14.6 Z" fill="url(#bxr)"/>
<path d="M1.5 4.9 L8 1.4 L14.5 4.9 L8 6.5 Z" fill="#fff6dc"/>
<path d="M2.8 5 L8 6.5 L8 8.2 L3.2 6.4 Z" fill="url(#bxf)" opacity="0.9"/>
<path d="M9 6.3 L14.4 5.2 L14.4 6.2 L9 7.3 Z" fill="#f1c050" opacity="0.6"/>
<path d="M8 2.6 L8 6.6" stroke="#d9a646" stroke-width="0.9"/>
<path d="M8 1.35 L14.7 4.95 L14.7 11.15 L8 14.65 L1.3 11.15 L1.3 4.95 Z" fill="none" stroke="#fffaf0" stroke-width="0.7" opacity="0.95"/>
</svg><svg width="16" height="16" viewBox="0 0 16 16" style="position:absolute;left:0;top:0"><path d="M9 8.8 L14.2 14 M14.2 8.8 L9 14" stroke="#f04a5a" stroke-width="2"/></svg></div>
<div class="chk" style="left:39px;top:5px"></div>
<div class="t" style="left:73.6px;top:5px;color:#aaa">Cmd - Shutdown</div>
<div class="ic" style="left:349px;top:5px"><svg width="16" height="16" viewBox="0 0 16 16"><defs><linearGradient id="cpg" x1="0" y1="0" x2="1" y2="1"><stop offset="0" stop-color="#a8c4ec"/><stop offset="1" stop-color="#e8f0fb"/></linearGradient><linearGradient id="cpb" x1="0" y1="0" x2="1" y2="0"><stop offset="0" stop-color="#dbe7f8"/><stop offset="1" stop-color="#8fb0e0"/></linearGradient></defs>
<path d="M4.7 1.6 Q4.7 0.8 5.5 0.8 L12.3 0.8 L15.3 3.8 L15.3 11.6 Q15.3 12.3 14.6 12.3 L13 12.3" fill="none" stroke="#3458aa" stroke-width="1.05" stroke-linejoin="round"/>
<path d="M5.5 1.8 L12 1.8 L14.3 4.1 L14.3 11.3 L11.9 11.3 L11.9 3.3 L5.5 3.3 Z" fill="url(#cpb)"/>
<path d="M12.2 1 L12.2 3.9 L15.1 3.9 Z" fill="#4f76c0"/>
<path d="M1.4 3.5 L8.5 3.5 L11.5 6.5 L11.5 14.5 Q11.5 15.4 10.6 15.4 L1.4 15.4 Q0.5 15.4 0.5 14.5 L0.5 4.4 Q0.5 3.5 1.4 3.5 Z" fill="#fff" stroke="#3458aa" stroke-width="1.05" stroke-linejoin="round"/>
<path d="M1.9 5 L7.5 5 L7.5 8.7 L10.1 8.7 L10.1 14 L1.9 14 Z" fill="url(#cpg)"/>
<path d="M8.7 4 L11 6.3 L11 7.9 L8.7 7.9 Z" fill="#8aaadc"/>
<path d="M8.35 3.6 L8.35 7.9" stroke="#3458aa" stroke-width="0.9"/>
</svg></div>
<div class="ic" style="left:370px;top:5px"><svg width="16" height="16" viewBox="0 0 16 16"><defs><linearGradient id="dlg" x1="0" y1="0" x2="0" y2="1"><stop offset="0" stop-color="#f7a08e"/><stop offset="0.45" stop-color="#ea6450"/><stop offset="0.6" stop-color="#e24836"/><stop offset="1" stop-color="#e65a48"/></linearGradient></defs>
<circle cx="8" cy="7.95" r="6.5" fill="url(#dlg)" stroke="#cf4636" stroke-width="0.9"/>
<circle cx="8" cy="7.95" r="5.3" fill="none" stroke="#ffd2c6" stroke-width="0.75" opacity="0.85"/>
<rect x="4.9" y="6.95" width="6.2" height="2.05" fill="#fff"/>
</svg></div>
</div>
<div class="row" style="top:216px">
<div class="ic" style="left:2px;top:4px"><svg width="16" height="16" viewBox="0 0 16 16"><defs><linearGradient id="bxl" x1="0" y1="0" x2="0.3" y2="1"><stop offset="0" stop-color="#fdf0c6"/><stop offset="1" stop-color="#f2cb6c"/></linearGradient><linearGradient id="bxr" x1="0" y1="0" x2="0.2" y2="1"><stop offset="0" stop-color="#fbe6a0"/><stop offset="0.35" stop-color="#f8d35e"/><stop offset="1" stop-color="#ecb334"/></linearGradient><linearGradient id="bxf" x1="0" y1="0" x2="1" y2="0"><stop offset="0" stop-color="#f6dc9a"/><stop offset="1" stop-color="#e2ad48"/></linearGradient></defs>
<path d="M8 0.5 L15.5 4.5 L15.5 11.6 L8 15.5 L0.5 11.6 L0.5 4.5 Z" fill="url(#bxl)" stroke="#d6a140" stroke-width="0.95"/>
<path d="M8 6.4 L14.6 5.1 L14.6 11.1 L8 14.6 Z" fill="url(#bxr)"/>
<path d="M1.5 4.9 L8 1.4 L14.5 4.9 L8 6.5 Z" fill="#fff6dc"/>
<path d="M2.8 5 L8 6.5 L8 8.2 L3.2 6.4 Z" fill="url(#bxf)" opacity="0.9"/>
<path d="M9 6.3 L14.4 5.2 L14.4 6.2 L9 7.3 Z" fill="#f1c050" opacity="0.6"/>
<path d="M8 2.6 L8 6.6" stroke="#d9a646" stroke-width="0.9"/>
<path d="M8 1.35 L14.7 4.95 L14.7 11.15 L8 14.65 L1.3 11.15 L1.3 4.95 Z" fill="none" stroke="#fffaf0" stroke-width="0.7" opacity="0.95"/>
</svg></div>
<div class="chk on" style="left:39px;top:5px"><svg width="14" height="14" viewBox="0 0 14 14"><path d="M2.8 7.1 L5.9 10.3 L11.6 3.3" stroke="#fff" stroke-width="2" fill="none"/></svg></div>
<div class="t" style="left:73.6px;top:5px;color:#333">Cmd - Tame Vista's UAC</div>
<div class="ic" style="left:349px;top:5px"><svg width="16" height="16" viewBox="0 0 16 16"><defs><linearGradient id="cpg" x1="0" y1="0" x2="1" y2="1"><stop offset="0" stop-color="#a8c4ec"/><stop offset="1" stop-color="#e8f0fb"/></linearGradient><linearGradient id="cpb" x1="0" y1="0" x2="1" y2="0"><stop offset="0" stop-color="#dbe7f8"/><stop offset="1" stop-color="#8fb0e0"/></linearGradient></defs>
<path d="M4.7 1.6 Q4.7 0.8 5.5 0.8 L12.3 0.8 L15.3 3.8 L15.3 11.6 Q15.3 12.3 14.6 12.3 L13 12.3" fill="none" stroke="#3458aa" stroke-width="1.05" stroke-linejoin="round"/>
<path d="M5.5 1.8 L12 1.8 L14.3 4.1 L14.3 11.3 L11.9 11.3 L11.9 3.3 L5.5 3.3 Z" fill="url(#cpb)"/>
<path d="M12.2 1 L12.2 3.9 L15.1 3.9 Z" fill="#4f76c0"/>
<path d="M1.4 3.5 L8.5 3.5 L11.5 6.5 L11.5 14.5 Q11.5 15.4 10.6 15.4 L1.4 15.4 Q0.5 15.4 0.5 14.5 L0.5 4.4 Q0.5 3.5 1.4 3.5 Z" fill="#fff" stroke="#3458aa" stroke-width="1.05" stroke-linejoin="round"/>
<path d="M1.9 5 L7.5 5 L7.5 8.7 L10.1 8.7 L10.1 14 L1.9 14 Z" fill="url(#cpg)"/>
<path d="M8.7 4 L11 6.3 L11 7.9 L8.7 7.9 Z" fill="#8aaadc"/>
<path d="M8.35 3.6 L8.35 7.9" stroke="#3458aa" stroke-width="0.9"/>
</svg></div>
<div class="ic" style="left:370px;top:5px"><svg width="16" height="16" viewBox="0 0 16 16"><defs><linearGradient id="dlg" x1="0" y1="0" x2="0" y2="1"><stop offset="0" stop-color="#f7a08e"/><stop offset="0.45" stop-color="#ea6450"/><stop offset="0.6" stop-color="#e24836"/><stop offset="1" stop-color="#e65a48"/></linearGradient></defs>
<circle cx="8" cy="7.95" r="6.5" fill="url(#dlg)" stroke="#cf4636" stroke-width="0.9"/>
<circle cx="8" cy="7.95" r="5.3" fill="none" stroke="#ffd2c6" stroke-width="0.75" opacity="0.85"/>
<rect x="4.9" y="6.95" width="6.2" height="2.05" fill="#fff"/>
</svg></div>
</div>
<div class="row" style="top:240px">
<div class="ic" style="left:2px;top:4px"><svg width="16" height="16" viewBox="0 0 16 16"><defs><linearGradient id="bxl" x1="0" y1="0" x2="0.3" y2="1"><stop offset="0" stop-color="#fdf0c6"/><stop offset="1" stop-color="#f2cb6c"/></linearGradient><linearGradient id="bxr" x1="0" y1="0" x2="0.2" y2="1"><stop offset="0" stop-color="#fbe6a0"/><stop offset="0.35" stop-color="#f8d35e"/><stop offset="1" stop-color="#ecb334"/></linearGradient><linearGradient id="bxf" x1="0" y1="0" x2="1" y2="0"><stop offset="0" stop-color="#f6dc9a"/><stop offset="1" stop-color="#e2ad48"/></linearGradient></defs>
<path d="M8 0.5 L15.5 4.5 L15.5 11.6 L8 15.5 L0.5 11.6 L0.5 4.5 Z" fill="url(#bxl)" stroke="#d6a140" stroke-width="0.95"/>
<path d="M8 6.4 L14.6 5.1 L14.6 11.1 L8 14.6 Z" fill="url(#bxr)"/>
<path d="M1.5 4.9 L8 1.4 L14.5 4.9 L8 6.5 Z" fill="#fff6dc"/>
<path d="M2.8 5 L8 6.5 L8 8.2 L3.2 6.4 Z" fill="url(#bxf)" opacity="0.9"/>
<path d="M9 6.3 L14.4 5.2 L14.4 6.2 L9 7.3 Z" fill="#f1c050" opacity="0.6"/>
<path d="M8 2.6 L8 6.6" stroke="#d9a646" stroke-width="0.9"/>
<path d="M8 1.35 L14.7 4.95 L14.7 11.15 L8 14.65 L1.3 11.15 L1.3 4.95 Z" fill="none" stroke="#fffaf0" stroke-width="0.7" opacity="0.95"/>
</svg></div>
<div class="chk on" style="left:39px;top:5px"><svg width="14" height="14" viewBox="0 0 14 14"><path d="M2.8 7.1 L5.9 10.3 L11.6 3.3" stroke="#fff" stroke-width="2" fill="none"/></svg></div>
<div class="t" style="left:73.6px;top:5px;color:#333">Kill - Chrome</div>
<div class="ic" style="left:349px;top:5px"><svg width="16" height="16" viewBox="0 0 16 16"><defs><linearGradient id="cpg" x1="0" y1="0" x2="1" y2="1"><stop offset="0" stop-color="#a8c4ec"/><stop offset="1" stop-color="#e8f0fb"/></linearGradient><linearGradient id="cpb" x1="0" y1="0" x2="1" y2="0"><stop offset="0" stop-color="#dbe7f8"/><stop offset="1" stop-color="#8fb0e0"/></linearGradient></defs>
<path d="M4.7 1.6 Q4.7 0.8 5.5 0.8 L12.3 0.8 L15.3 3.8 L15.3 11.6 Q15.3 12.3 14.6 12.3 L13 12.3" fill="none" stroke="#3458aa" stroke-width="1.05" stroke-linejoin="round"/>
<path d="M5.5 1.8 L12 1.8 L14.3 4.1 L14.3 11.3 L11.9 11.3 L11.9 3.3 L5.5 3.3 Z" fill="url(#cpb)"/>
<path d="M12.2 1 L12.2 3.9 L15.1 3.9 Z" fill="#4f76c0"/>
<path d="M1.4 3.5 L8.5 3.5 L11.5 6.5 L11.5 14.5 Q11.5 15.4 10.6 15.4 L1.4 15.4 Q0.5 15.4 0.5 14.5 L0.5 4.4 Q0.5 3.5 1.4 3.5 Z" fill="#fff" stroke="#3458aa" stroke-width="1.05" stroke-linejoin="round"/>
<path d="M1.9 5 L7.5 5 L7.5 8.7 L10.1 8.7 L10.1 14 L1.9 14 Z" fill="url(#cpg)"/>
<path d="M8.7 4 L11 6.3 L11 7.9 L8.7 7.9 Z" fill="#8aaadc"/>
<path d="M8.35 3.6 L8.35 7.9" stroke="#3458aa" stroke-width="0.9"/>
</svg></div>
<div class="ic" style="left:370px;top:5px"><svg width="16" height="16" viewBox="0 0 16 16"><defs><linearGradient id="dlg" x1="0" y1="0" x2="0" y2="1"><stop offset="0" stop-color="#f7a08e"/><stop offset="0.45" stop-color="#ea6450"/><stop offset="0.6" stop-color="#e24836"/><stop offset="1" stop-color="#e65a48"/></linearGradient></defs>
<circle cx="8" cy="7.95" r="6.5" fill="url(#dlg)" stroke="#cf4636" stroke-width="0.9"/>
<circle cx="8" cy="7.95" r="5.3" fill="none" stroke="#ffd2c6" stroke-width="0.75" opacity="0.85"/>
<rect x="4.9" y="6.95" width="6.2" height="2.05" fill="#fff"/>
</svg></div>
</div>
<div class="row" style="top:264px">
<div class="ic" style="left:2px;top:4px"><svg width="16" height="16" viewBox="0 0 16 16"><defs><linearGradient id="bxl" x1="0" y1="0" x2="0.3" y2="1"><stop offset="0" stop-color="#fdf0c6"/><stop offset="1" stop-color="#f2cb6c"/></linearGradient><linearGradient id="bxr" x1="0" y1="0" x2="0.2" y2="1"><stop offset="0" stop-color="#fbe6a0"/><stop offset="0.35" stop-color="#f8d35e"/><stop offset="1" stop-color="#ecb334"/></linearGradient><linearGradient id="bxf" x1="0" y1="0" x2="1" y2="0"><stop offset="0" stop-color="#f6dc9a"/><stop offset="1" stop-color="#e2ad48"/></linearGradient></defs>
<path d="M8 0.5 L15.5 4.5 L15.5 11.6 L8 15.5 L0.5 11.6 L0.5 4.5 Z" fill="url(#bxl)" stroke="#d6a140" stroke-width="0.95"/>
<path d="M8 6.4 L14.6 5.1 L14.6 11.1 L8 14.6 Z" fill="url(#bxr)"/>
<path d="M1.5 4.9 L8 1.4 L14.5 4.9 L8 6.5 Z" fill="#fff6dc"/>
<path d="M2.8 5 L8 6.5 L8 8.2 L3.2 6.4 Z" fill="url(#bxf)" opacity="0.9"/>
<path d="M9 6.3 L14.4 5.2 L14.4 6.2 L9 7.3 Z" fill="#f1c050" opacity="0.6"/>
<path d="M8 2.6 L8 6.6" stroke="#d9a646" stroke-width="0.9"/>
<path d="M8 1.35 L14.7 4.95 L14.7 11.15 L8 14.65 L1.3 11.15 L1.3 4.95 Z" fill="none" stroke="#fffaf0" stroke-width="0.7" opacity="0.95"/>
</svg></div>
<div class="chk on" style="left:39px;top:5px"><svg width="14" height="14" viewBox="0 0 14 14"><path d="M2.8 7.1 L5.9 10.3 L11.6 3.3" stroke="#fff" stroke-width="2" fill="none"/></svg></div>
<div class="t" style="left:73.6px;top:5px;color:#333">Kill - Firefox</div>
<div class="ic" style="left:349px;top:5px"><svg width="16" height="16" viewBox="0 0 16 16"><defs><linearGradient id="cpg" x1="0" y1="0" x2="1" y2="1"><stop offset="0" stop-color="#a8c4ec"/><stop offset="1" stop-color="#e8f0fb"/></linearGradient><linearGradient id="cpb" x1="0" y1="0" x2="1" y2="0"><stop offset="0" stop-color="#dbe7f8"/><stop offset="1" stop-color="#8fb0e0"/></linearGradient></defs>
<path d="M4.7 1.6 Q4.7 0.8 5.5 0.8 L12.3 0.8 L15.3 3.8 L15.3 11.6 Q15.3 12.3 14.6 12.3 L13 12.3" fill="none" stroke="#3458aa" stroke-width="1.05" stroke-linejoin="round"/>
<path d="M5.5 1.8 L12 1.8 L14.3 4.1 L14.3 11.3 L11.9 11.3 L11.9 3.3 L5.5 3.3 Z" fill="url(#cpb)"/>
<path d="M12.2 1 L12.2 3.9 L15.1 3.9 Z" fill="#4f76c0"/>
<path d="M1.4 3.5 L8.5 3.5 L11.5 6.5 L11.5 14.5 Q11.5 15.4 10.6 15.4 L1.4 15.4 Q0.5 15.4 0.5 14.5 L0.5 4.4 Q0.5 3.5 1.4 3.5 Z" fill="#fff" stroke="#3458aa" stroke-width="1.05" stroke-linejoin="round"/>
<path d="M1.9 5 L7.5 5 L7.5 8.7 L10.1 8.7 L10.1 14 L1.9 14 Z" fill="url(#cpg)"/>
<path d="M8.7 4 L11 6.3 L11 7.9 L8.7 7.9 Z" fill="#8aaadc"/>
<path d="M8.35 3.6 L8.35 7.9" stroke="#3458aa" stroke-width="0.9"/>
</svg></div>
<div class="ic" style="left:370px;top:5px"><svg width="16" height="16" viewBox="0 0 16 16"><defs><linearGradient id="dlg" x1="0" y1="0" x2="0" y2="1"><stop offset="0" stop-color="#f7a08e"/><stop offset="0.45" stop-color="#ea6450"/><stop offset="0.6" stop-color="#e24836"/><stop offset="1" stop-color="#e65a48"/></linearGradient></defs>
<circle cx="8" cy="7.95" r="6.5" fill="url(#dlg)" stroke="#cf4636" stroke-width="0.9"/>
<circle cx="8" cy="7.95" r="5.3" fill="none" stroke="#ffd2c6" stroke-width="0.75" opacity="0.85"/>
<rect x="4.9" y="6.95" width="6.2" height="2.05" fill="#fff"/>
</svg></div>
</div>
<div class="row" style="top:288px">
<div class="ic" style="left:2px;top:4px"><svg width="16" height="16" viewBox="0 0 16 16"><defs><linearGradient id="bxl" x1="0" y1="0" x2="0.3" y2="1"><stop offset="0" stop-color="#fdf0c6"/><stop offset="1" stop-color="#f2cb6c"/></linearGradient><linearGradient id="bxr" x1="0" y1="0" x2="0.2" y2="1"><stop offset="0" stop-color="#fbe6a0"/><stop offset="0.35" stop-color="#f8d35e"/><stop offset="1" stop-color="#ecb334"/></linearGradient><linearGradient id="bxf" x1="0" y1="0" x2="1" y2="0"><stop offset="0" stop-color="#f6dc9a"/><stop offset="1" stop-color="#e2ad48"/></linearGradient></defs>
<path d="M8 0.5 L15.5 4.5 L15.5 11.6 L8 15.5 L0.5 11.6 L0.5 4.5 Z" fill="url(#bxl)" stroke="#d6a140" stroke-width="0.95"/>
<path d="M8 6.4 L14.6 5.1 L14.6 11.1 L8 14.6 Z" fill="url(#bxr)"/>
<path d="M1.5 4.9 L8 1.4 L14.5 4.9 L8 6.5 Z" fill="#fff6dc"/>
<path d="M2.8 5 L8 6.5 L8 8.2 L3.2 6.4 Z" fill="url(#bxf)" opacity="0.9"/>
<path d="M9 6.3 L14.4 5.2 L14.4 6.2 L9 7.3 Z" fill="#f1c050" opacity="0.6"/>
<path d="M8 2.6 L8 6.6" stroke="#d9a646" stroke-width="0.9"/>
<path d="M8 1.35 L14.7 4.95 L14.7 11.15 L8 14.65 L1.3 11.15 L1.3 4.95 Z" fill="none" stroke="#fffaf0" stroke-width="0.7" opacity="0.95"/>
</svg></div>
<div class="chk on" style="left:39px;top:5px"><svg width="14" height="14" viewBox="0 0 14 14"><path d="M2.8 7.1 L5.9 10.3 L11.6 3.3" stroke="#fff" stroke-width="2" fill="none"/></svg></div>
<div class="t" style="left:73.6px;top:5px;color:#333">Kill - Internet Explorer</div>
<div class="ic" style="left:349px;top:5px"><svg width="16" height="16" viewBox="0 0 16 16"><defs><linearGradient id="cpg" x1="0" y1="0" x2="1" y2="1"><stop offset="0" stop-color="#a8c4ec"/><stop offset="1" stop-color="#e8f0fb"/></linearGradient><linearGradient id="cpb" x1="0" y1="0" x2="1" y2="0"><stop offset="0" stop-color="#dbe7f8"/><stop offset="1" stop-color="#8fb0e0"/></linearGradient></defs>
<path d="M4.7 1.6 Q4.7 0.8 5.5 0.8 L12.3 0.8 L15.3 3.8 L15.3 11.6 Q15.3 12.3 14.6 12.3 L13 12.3" fill="none" stroke="#3458aa" stroke-width="1.05" stroke-linejoin="round"/>
<path d="M5.5 1.8 L12 1.8 L14.3 4.1 L14.3 11.3 L11.9 11.3 L11.9 3.3 L5.5 3.3 Z" fill="url(#cpb)"/>
<path d="M12.2 1 L12.2 3.9 L15.1 3.9 Z" fill="#4f76c0"/>
<path d="M1.4 3.5 L8.5 3.5 L11.5 6.5 L11.5 14.5 Q11.5 15.4 10.6 15.4 L1.4 15.4 Q0.5 15.4 0.5 14.5 L0.5 4.4 Q0.5 3.5 1.4 3.5 Z" fill="#fff" stroke="#3458aa" stroke-width="1.05" stroke-linejoin="round"/>
<path d="M1.9 5 L7.5 5 L7.5 8.7 L10.1 8.7 L10.1 14 L1.9 14 Z" fill="url(#cpg)"/>
<path d="M8.7 4 L11 6.3 L11 7.9 L8.7 7.9 Z" fill="#8aaadc"/>
<path d="M8.35 3.6 L8.35 7.9" stroke="#3458aa" stroke-width="0.9"/>
</svg></div>
<div class="ic" style="left:370px;top:5px"><svg width="16" height="16" viewBox="0 0 16 16"><defs><linearGradient id="dlg" x1="0" y1="0" x2="0" y2="1"><stop offset="0" stop-color="#f7a08e"/><stop offset="0.45" stop-color="#ea6450"/><stop offset="0.6" stop-color="#e24836"/><stop offset="1" stop-color="#e65a48"/></linearGradient></defs>
<circle cx="8" cy="7.95" r="6.5" fill="url(#dlg)" stroke="#cf4636" stroke-width="0.9"/>
<circle cx="8" cy="7.95" r="5.3" fill="none" stroke="#ffd2c6" stroke-width="0.75" opacity="0.85"/>
<rect x="4.9" y="6.95" width="6.2" height="2.05" fill="#fff"/>
</svg></div>
</div>
<div class="row" style="top:312px">
<div class="ic" style="left:2px;top:4px"><svg width="16" height="16" viewBox="0 0 16 16"><defs><linearGradient id="bxl" x1="0" y1="0" x2="0.3" y2="1"><stop offset="0" stop-color="#fdf0c6"/><stop offset="1" stop-color="#f2cb6c"/></linearGradient><linearGradient id="bxr" x1="0" y1="0" x2="0.2" y2="1"><stop offset="0" stop-color="#fbe6a0"/><stop offset="0.35" stop-color="#f8d35e"/><stop offset="1" stop-color="#ecb334"/></linearGradient><linearGradient id="bxf" x1="0" y1="0" x2="1" y2="0"><stop offset="0" stop-color="#f6dc9a"/><stop offset="1" stop-color="#e2ad48"/></linearGradient></defs>
<path d="M8 0.5 L15.5 4.5 L15.5 11.6 L8 15.5 L0.5 11.6 L0.5 4.5 Z" fill="url(#bxl)" stroke="#d6a140" stroke-width="0.95"/>
<path d="M8 6.4 L14.6 5.1 L14.6 11.1 L8 14.6 Z" fill="url(#bxr)"/>
<path d="M1.5 4.9 L8 1.4 L14.5 4.9 L8 6.5 Z" fill="#fff6dc"/>
<path d="M2.8 5 L8 6.5 L8 8.2 L3.2 6.4 Z" fill="url(#bxf)" opacity="0.9"/>
<path d="M9 6.3 L14.4 5.2 L14.4 6.2 L9 7.3 Z" fill="#f1c050" opacity="0.6"/>
<path d="M8 2.6 L8 6.6" stroke="#d9a646" stroke-width="0.9"/>
<path d="M8 1.35 L14.7 4.95 L14.7 11.15 L8 14.65 L1.3 11.15 L1.3 4.95 Z" fill="none" stroke="#fffaf0" stroke-width="0.7" opacity="0.95"/>
</svg></div>
<div class="chk on" style="left:39px;top:5px"><svg width="14" height="14" viewBox="0 0 14 14"><path d="M2.8 7.1 L5.9 10.3 L11.6 3.3" stroke="#fff" stroke-width="2" fill="none"/></svg></div>
<div class="t" style="left:73.6px;top:5px;color:#333">LsAgent for Windows</div>
<div class="ic" style="left:349px;top:5px"><svg width="16" height="16" viewBox="0 0 16 16"><defs><linearGradient id="cpg" x1="0" y1="0" x2="1" y2="1"><stop offset="0" stop-color="#a8c4ec"/><stop offset="1" stop-color="#e8f0fb"/></linearGradient><linearGradient id="cpb" x1="0" y1="0" x2="1" y2="0"><stop offset="0" stop-color="#dbe7f8"/><stop offset="1" stop-color="#8fb0e0"/></linearGradient></defs>
<path d="M4.7 1.6 Q4.7 0.8 5.5 0.8 L12.3 0.8 L15.3 3.8 L15.3 11.6 Q15.3 12.3 14.6 12.3 L13 12.3" fill="none" stroke="#3458aa" stroke-width="1.05" stroke-linejoin="round"/>
<path d="M5.5 1.8 L12 1.8 L14.3 4.1 L14.3 11.3 L11.9 11.3 L11.9 3.3 L5.5 3.3 Z" fill="url(#cpb)"/>
<path d="M12.2 1 L12.2 3.9 L15.1 3.9 Z" fill="#4f76c0"/>
<path d="M1.4 3.5 L8.5 3.5 L11.5 6.5 L11.5 14.5 Q11.5 15.4 10.6 15.4 L1.4 15.4 Q0.5 15.4 0.5 14.5 L0.5 4.4 Q0.5 3.5 1.4 3.5 Z" fill="#fff" stroke="#3458aa" stroke-width="1.05" stroke-linejoin="round"/>
<path d="M1.9 5 L7.5 5 L7.5 8.7 L10.1 8.7 L10.1 14 L1.9 14 Z" fill="url(#cpg)"/>
<path d="M8.7 4 L11 6.3 L11 7.9 L8.7 7.9 Z" fill="#8aaadc"/>
<path d="M8.35 3.6 L8.35 7.9" stroke="#3458aa" stroke-width="0.9"/>
</svg></div>
<div class="ic" style="left:370px;top:5px"><svg width="16" height="16" viewBox="0 0 16 16"><defs><linearGradient id="dlg" x1="0" y1="0" x2="0" y2="1"><stop offset="0" stop-color="#f7a08e"/><stop offset="0.45" stop-color="#ea6450"/><stop offset="0.6" stop-color="#e24836"/><stop offset="1" stop-color="#e65a48"/></linearGradient></defs>
<circle cx="8" cy="7.95" r="6.5" fill="url(#dlg)" stroke="#cf4636" stroke-width="0.9"/>
<circle cx="8" cy="7.95" r="5.3" fill="none" stroke="#ffd2c6" stroke-width="0.75" opacity="0.85"/>
<rect x="4.9" y="6.95" width="6.2" height="2.05" fill="#fff"/>
</svg></div>
</div>
<div class="row" style="top:336px">
<div class="ic" style="left:2px;top:4px"><svg width="16" height="16" viewBox="0 0 16 16"><defs><linearGradient id="bxl" x1="0" y1="0" x2="0.3" y2="1"><stop offset="0" stop-color="#fdf0c6"/><stop offset="1" stop-color="#f2cb6c"/></linearGradient><linearGradient id="bxr" x1="0" y1="0" x2="0.2" y2="1"><stop offset="0" stop-color="#fbe6a0"/><stop offset="0.35" stop-color="#f8d35e"/><stop offset="1" stop-color="#ecb334"/></linearGradient><linearGradient id="bxf" x1="0" y1="0" x2="1" y2="0"><stop offset="0" stop-color="#f6dc9a"/><stop offset="1" stop-color="#e2ad48"/></linearGradient></defs>
<path d="M8 0.5 L15.5 4.5 L15.5 11.6 L8 15.5 L0.5 11.6 L0.5 4.5 Z" fill="url(#bxl)" stroke="#d6a140" stroke-width="0.95"/>
<path d="M8 6.4 L14.6 5.1 L14.6 11.1 L8 14.6 Z" fill="url(#bxr)"/>
<path d="M1.5 4.9 L8 1.4 L14.5 4.9 L8 6.5 Z" fill="#fff6dc"/>
<path d="M2.8 5 L8 6.5 L8 8.2 L3.2 6.4 Z" fill="url(#bxf)" opacity="0.9"/>
<path d="M9 6.3 L14.4 5.2 L14.4 6.2 L9 7.3 Z" fill="#f1c050" opacity="0.6"/>
<path d="M8 2.6 L8 6.6" stroke="#d9a646" stroke-width="0.9"/>
<path d="M8 1.35 L14.7 4.95 L14.7 11.15 L8 14.65 L1.3 11.15 L1.3 4.95 Z" fill="none" stroke="#fffaf0" stroke-width="0.7" opacity="0.95"/>
</svg></div>
<div class="chk on" style="left:39px;top:5px"><svg width="14" height="14" viewBox="0 0 14 14"><path d="M2.8 7.1 L5.9 10.3 L11.6 3.3" stroke="#fff" stroke-width="2" fill="none"/></svg></div>
<div class="t" style="left:73.6px;top:5px;color:#333">MSI-Uninstaller - Firefox 27.0</div>
<div class="ic" style="left:349px;top:5px"><svg width="16" height="16" viewBox="0 0 16 16"><defs><linearGradient id="cpg" x1="0" y1="0" x2="1" y2="1"><stop offset="0" stop-color="#a8c4ec"/><stop offset="1" stop-color="#e8f0fb"/></linearGradient><linearGradient id="cpb" x1="0" y1="0" x2="1" y2="0"><stop offset="0" stop-color="#dbe7f8"/><stop offset="1" stop-color="#8fb0e0"/></linearGradient></defs>
<path d="M4.7 1.6 Q4.7 0.8 5.5 0.8 L12.3 0.8 L15.3 3.8 L15.3 11.6 Q15.3 12.3 14.6 12.3 L13 12.3" fill="none" stroke="#3458aa" stroke-width="1.05" stroke-linejoin="round"/>
<path d="M5.5 1.8 L12 1.8 L14.3 4.1 L14.3 11.3 L11.9 11.3 L11.9 3.3 L5.5 3.3 Z" fill="url(#cpb)"/>
<path d="M12.2 1 L12.2 3.9 L15.1 3.9 Z" fill="#4f76c0"/>
<path d="M1.4 3.5 L8.5 3.5 L11.5 6.5 L11.5 14.5 Q11.5 15.4 10.6 15.4 L1.4 15.4 Q0.5 15.4 0.5 14.5 L0.5 4.4 Q0.5 3.5 1.4 3.5 Z" fill="#fff" stroke="#3458aa" stroke-width="1.05" stroke-linejoin="round"/>
<path d="M1.9 5 L7.5 5 L7.5 8.7 L10.1 8.7 L10.1 14 L1.9 14 Z" fill="url(#cpg)"/>
<path d="M8.7 4 L11 6.3 L11 7.9 L8.7 7.9 Z" fill="#8aaadc"/>
<path d="M8.35 3.6 L8.35 7.9" stroke="#3458aa" stroke-width="0.9"/>
</svg></div>
<div class="ic" style="left:370px;top:5px"><svg width="16" height="16" viewBox="0 0 16 16"><defs><linearGradient id="dlg" x1="0" y1="0" x2="0" y2="1"><stop offset="0" stop-color="#f7a08e"/><stop offset="0.45" stop-color="#ea6450"/><stop offset="0.6" stop-color="#e24836"/><stop offset="1" stop-color="#e65a48"/></linearGradient></defs>
<circle cx="8" cy="7.95" r="6.5" fill="url(#dlg)" stroke="#cf4636" stroke-width="0.9"/>
<circle cx="8" cy="7.95" r="5.3" fill="none" stroke="#ffd2c6" stroke-width="0.75" opacity="0.85"/>
<rect x="4.9" y="6.95" width="6.2" height="2.05" fill="#fff"/>
</svg></div>
</div>
<div class="row" style="top:360px">
<div class="ic" style="left:2px;top:4px"><svg width="16" height="16" viewBox="0 0 16 16"><defs><linearGradient id="bxl" x1="0" y1="0" x2="0.3" y2="1"><stop offset="0" stop-color="#fdf0c6"/><stop offset="1" stop-color="#f2cb6c"/></linearGradient><linearGradient id="bxr" x1="0" y1="0" x2="0.2" y2="1"><stop offset="0" stop-color="#fbe6a0"/><stop offset="0.35" stop-color="#f8d35e"/><stop offset="1" stop-color="#ecb334"/></linearGradient><linearGradient id="bxf" x1="0" y1="0" x2="1" y2="0"><stop offset="0" stop-color="#f6dc9a"/><stop offset="1" stop-color="#e2ad48"/></linearGradient></defs>
<path d="M8 0.5 L15.5 4.5 L15.5 11.6 L8 15.5 L0.5 11.6 L0.5 4.5 Z" fill="url(#bxl)" stroke="#d6a140" stroke-width="0.95"/>
<path d="M8 6.4 L14.6 5.1 L14.6 11.1 L8 14.6 Z" fill="url(#bxr)"/>
<path d="M1.5 4.9 L8 1.4 L14.5 4.9 L8 6.5 Z" fill="#fff6dc"/>
<path d="M2.8 5 L8 6.5 L8 8.2 L3.2 6.4 Z" fill="url(#bxf)" opacity="0.9"/>
<path d="M9 6.3 L14.4 5.2 L14.4 6.2 L9 7.3 Z" fill="#f1c050" opacity="0.6"/>
<path d="M8 2.6 L8 6.6" stroke="#d9a646" stroke-width="0.9"/>
<path d="M8 1.35 L14.7 4.95 L14.7 11.15 L8 14.65 L1.3 11.15 L1.3 4.95 Z" fill="none" stroke="#fffaf0" stroke-width="0.7" opacity="0.95"/>
</svg></div>
<div class="chk on" style="left:39px;top:5px"><svg width="14" height="14" viewBox="0 0 14 14"><path d="M2.8 7.1 L5.9 10.3 L11.6 3.3" stroke="#fff" stroke-width="2" fill="none"/></svg></div>
<div class="t" style="left:73.6px;top:5px;color:#333">Script - Change Computer Description</div>
<div class="ic" style="left:349px;top:5px"><svg width="16" height="16" viewBox="0 0 16 16"><defs><linearGradient id="cpg" x1="0" y1="0" x2="1" y2="1"><stop offset="0" stop-color="#a8c4ec"/><stop offset="1" stop-color="#e8f0fb"/></linearGradient><linearGradient id="cpb" x1="0" y1="0" x2="1" y2="0"><stop offset="0" stop-color="#dbe7f8"/><stop offset="1" stop-color="#8fb0e0"/></linearGradient></defs>
<path d="M4.7 1.6 Q4.7 0.8 5.5 0.8 L12.3 0.8 L15.3 3.8 L15.3 11.6 Q15.3 12.3 14.6 12.3 L13 12.3" fill="none" stroke="#3458aa" stroke-width="1.05" stroke-linejoin="round"/>
<path d="M5.5 1.8 L12 1.8 L14.3 4.1 L14.3 11.3 L11.9 11.3 L11.9 3.3 L5.5 3.3 Z" fill="url(#cpb)"/>
<path d="M12.2 1 L12.2 3.9 L15.1 3.9 Z" fill="#4f76c0"/>
<path d="M1.4 3.5 L8.5 3.5 L11.5 6.5 L11.5 14.5 Q11.5 15.4 10.6 15.4 L1.4 15.4 Q0.5 15.4 0.5 14.5 L0.5 4.4 Q0.5 3.5 1.4 3.5 Z" fill="#fff" stroke="#3458aa" stroke-width="1.05" stroke-linejoin="round"/>
<path d="M1.9 5 L7.5 5 L7.5 8.7 L10.1 8.7 L10.1 14 L1.9 14 Z" fill="url(#cpg)"/>
<path d="M8.7 4 L11 6.3 L11 7.9 L8.7 7.9 Z" fill="#8aaadc"/>
<path d="M8.35 3.6 L8.35 7.9" stroke="#3458aa" stroke-width="0.9"/>
</svg></div>
<div class="ic" style="left:370px;top:5px"><svg width="16" height="16" viewBox="0 0 16 16"><defs><linearGradient id="dlg" x1="0" y1="0" x2="0" y2="1"><stop offset="0" stop-color="#f7a08e"/><stop offset="0.45" stop-color="#ea6450"/><stop offset="0.6" stop-color="#e24836"/><stop offset="1" stop-color="#e65a48"/></linearGradient></defs>
<circle cx="8" cy="7.95" r="6.5" fill="url(#dlg)" stroke="#cf4636" stroke-width="0.9"/>
<circle cx="8" cy="7.95" r="5.3" fill="none" stroke="#ffd2c6" stroke-width="0.75" opacity="0.85"/>
<rect x="4.9" y="6.95" width="6.2" height="2.05" fill="#fff"/>
</svg></div>
</div>
<div class="row" style="top:384px">
<div class="ic" style="left:2px;top:4px"><svg width="16" height="16" viewBox="0 0 16 16"><defs><linearGradient id="bxl" x1="0" y1="0" x2="0.3" y2="1"><stop offset="0" stop-color="#fdf0c6"/><stop offset="1" stop-color="#f2cb6c"/></linearGradient><linearGradient id="bxr" x1="0" y1="0" x2="0.2" y2="1"><stop offset="0" stop-color="#fbe6a0"/><stop offset="0.35" stop-color="#f8d35e"/><stop offset="1" stop-color="#ecb334"/></linearGradient><linearGradient id="bxf" x1="0" y1="0" x2="1" y2="0"><stop offset="0" stop-color="#f6dc9a"/><stop offset="1" stop-color="#e2ad48"/></linearGradient></defs>
<path d="M8 0.5 L15.5 4.5 L15.5 11.6 L8 15.5 L0.5 11.6 L0.5 4.5 Z" fill="url(#bxl)" stroke="#d6a140" stroke-width="0.95"/>
<path d="M8 6.4 L14.6 5.1 L14.6 11.1 L8 14.6 Z" fill="url(#bxr)"/>
<path d="M1.5 4.9 L8 1.4 L14.5 4.9 L8 6.5 Z" fill="#fff6dc"/>
<path d="M2.8 5 L8 6.5 L8 8.2 L3.2 6.4 Z" fill="url(#bxf)" opacity="0.9"/>
<path d="M9 6.3 L14.4 5.2 L14.4 6.2 L9 7.3 Z" fill="#f1c050" opacity="0.6"/>
<path d="M8 2.6 L8 6.6" stroke="#d9a646" stroke-width="0.9"/>
<path d="M8 1.35 L14.7 4.95 L14.7 11.15 L8 14.65 L1.3 11.15 L1.3 4.95 Z" fill="none" stroke="#fffaf0" stroke-width="0.7" opacity="0.95"/>
</svg></div>
<div class="chk on" style="left:39px;top:5px"><svg width="14" height="14" viewBox="0 0 14 14"><path d="M2.8 7.1 L5.9 10.3 L11.6 3.3" stroke="#fff" stroke-width="2" fill="none"/></svg></div>
<div class="t" style="left:73.6px;top:5px;color:#333">Script - Change Desktop Wallpaper</div>
<div class="ic" style="left:349px;top:5px"><svg width="16" height="16" viewBox="0 0 16 16"><defs><linearGradient id="cpg" x1="0" y1="0" x2="1" y2="1"><stop offset="0" stop-color="#a8c4ec"/><stop offset="1" stop-color="#e8f0fb"/></linearGradient><linearGradient id="cpb" x1="0" y1="0" x2="1" y2="0"><stop offset="0" stop-color="#dbe7f8"/><stop offset="1" stop-color="#8fb0e0"/></linearGradient></defs>
<path d="M4.7 1.6 Q4.7 0.8 5.5 0.8 L12.3 0.8 L15.3 3.8 L15.3 11.6 Q15.3 12.3 14.6 12.3 L13 12.3" fill="none" stroke="#3458aa" stroke-width="1.05" stroke-linejoin="round"/>
<path d="M5.5 1.8 L12 1.8 L14.3 4.1 L14.3 11.3 L11.9 11.3 L11.9 3.3 L5.5 3.3 Z" fill="url(#cpb)"/>
<path d="M12.2 1 L12.2 3.9 L15.1 3.9 Z" fill="#4f76c0"/>
<path d="M1.4 3.5 L8.5 3.5 L11.5 6.5 L11.5 14.5 Q11.5 15.4 10.6 15.4 L1.4 15.4 Q0.5 15.4 0.5 14.5 L0.5 4.4 Q0.5 3.5 1.4 3.5 Z" fill="#fff" stroke="#3458aa" stroke-width="1.05" stroke-linejoin="round"/>
<path d="M1.9 5 L7.5 5 L7.5 8.7 L10.1 8.7 L10.1 14 L1.9 14 Z" fill="url(#cpg)"/>
<path d="M8.7 4 L11 6.3 L11 7.9 L8.7 7.9 Z" fill="#8aaadc"/>
<path d="M8.35 3.6 L8.35 7.9" stroke="#3458aa" stroke-width="0.9"/>
</svg></div>
<div class="ic" style="left:370px;top:5px"><svg width="16" height="16" viewBox="0 0 16 16"><defs><linearGradient id="dlg" x1="0" y1="0" x2="0" y2="1"><stop offset="0" stop-color="#f7a08e"/><stop offset="0.45" stop-color="#ea6450"/><stop offset="0.6" stop-color="#e24836"/><stop offset="1" stop-color="#e65a48"/></linearGradient></defs>
<circle cx="8" cy="7.95" r="6.5" fill="url(#dlg)" stroke="#cf4636" stroke-width="0.9"/>
<circle cx="8" cy="7.95" r="5.3" fill="none" stroke="#ffd2c6" stroke-width="0.75" opacity="0.85"/>
<rect x="4.9" y="6.95" width="6.2" height="2.05" fill="#fff"/>
</svg></div>
</div>
<div class="row" style="top:408px">
<div class="ic" style="left:2px;top:4px"><svg width="16" height="16" viewBox="0 0 16 16"><defs><linearGradient id="bxl" x1="0" y1="0" x2="0.3" y2="1"><stop offset="0" stop-color="#fdf0c6"/><stop offset="1" stop-color="#f2cb6c"/></linearGradient><linearGradient id="bxr" x1="0" y1="0" x2="0.2" y2="1"><stop offset="0" stop-color="#fbe6a0"/><stop offset="0.35" stop-color="#f8d35e"/><stop offset="1" stop-color="#ecb334"/></linearGradient><linearGradient id="bxf" x1="0" y1="0" x2="1" y2="0"><stop offset="0" stop-color="#f6dc9a"/><stop offset="1" stop-color="#e2ad48"/></linearGradient></defs>
<path d="M8 0.5 L15.5 4.5 L15.5 11.6 L8 15.5 L0.5 11.6 L0.5 4.5 Z" fill="url(#bxl)" stroke="#d6a140" stroke-width="0.95"/>
<path d="M8 6.4 L14.6 5.1 L14.6 11.1 L8 14.6 Z" fill="url(#bxr)"/>
<path d="M1.5 4.9 L8 1.4 L14.5 4.9 L8 6.5 Z" fill="#fff6dc"/>
<path d="M2.8 5 L8 6.5 L8 8.2 L3.2 6.4 Z" fill="url(#bxf)" opacity="0.9"/>
<path d="M9 6.3 L14.4 5.2 L14.4 6.2 L9 7.3 Z" fill="#f1c050" opacity="0.6"/>
<path d="M8 2.6 L8 6.6" stroke="#d9a646" stroke-width="0.9"/>
<path d="M8 1.35 L14.7 4.95 L14.7 11.15 L8 14.65 L1.3 11.15 L1.3 4.95 Z" fill="none" stroke="#fffaf0" stroke-width="0.7" opacity="0.95"/>
</svg></div>
<div class="chk on" style="left:39px;top:5px"><svg width="14" height="14" viewBox="0 0 14 14"><path d="M2.8 7.1 L5.9 10.3 L11.6 3.3" stroke="#fff" stroke-width="2" fill="none"/></svg></div>
<div class="t" style="left:73.6px;top:5px;color:#333">Uninstaller - Firefox 26.0</div>
<div class="ic" style="left:349px;top:5px"><svg width="16" height="16" viewBox="0 0 16 16"><defs><linearGradient id="cpg" x1="0" y1="0" x2="1" y2="1"><stop offset="0" stop-color="#a8c4ec"/><stop offset="1" stop-color="#e8f0fb"/></linearGradient><linearGradient id="cpb" x1="0" y1="0" x2="1" y2="0"><stop offset="0" stop-color="#dbe7f8"/><stop offset="1" stop-color="#8fb0e0"/></linearGradient></defs>
<path d="M4.7 1.6 Q4.7 0.8 5.5 0.8 L12.3 0.8 L15.3 3.8 L15.3 11.6 Q15.3 12.3 14.6 12.3 L13 12.3" fill="none" stroke="#3458aa" stroke-width="1.05" stroke-linejoin="round"/>
<path d="M5.5 1.8 L12 1.8 L14.3 4.1 L14.3 11.3 L11.9 11.3 L11.9 3.3 L5.5 3.3 Z" fill="url(#cpb)"/>
<path d="M12.2 1 L12.2 3.9 L15.1 3.9 Z" fill="#4f76c0"/>
<path d="M1.4 3.5 L8.5 3.5 L11.5 6.5 L11.5 14.5 Q11.5 15.4 10.6 15.4 L1.4 15.4 Q0.5 15.4 0.5 14.5 L0.5 4.4 Q0.5 3.5 1.4 3.5 Z" fill="#fff" stroke="#3458aa" stroke-width="1.05" stroke-linejoin="round"/>
<path d="M1.9 5 L7.5 5 L7.5 8.7 L10.1 8.7 L10.1 14 L1.9 14 Z" fill="url(#cpg)"/>
<path d="M8.7 4 L11 6.3 L11 7.9 L8.7 7.9 Z" fill="#8aaadc"/>
<path d="M8.35 3.6 L8.35 7.9" stroke="#3458aa" stroke-width="0.9"/>
</svg></div>
<div class="ic" style="left:370px;top:5px"><svg width="16" height="16" viewBox="0 0 16 16"><defs><linearGradient id="dlg" x1="0" y1="0" x2="0" y2="1"><stop offset="0" stop-color="#f7a08e"/><stop offset="0.45" stop-color="#ea6450"/><stop offset="0.6" stop-color="#e24836"/><stop offset="1" stop-color="#e65a48"/></linearGradient></defs>
<circle cx="8" cy="7.95" r="6.5" fill="url(#dlg)" stroke="#cf4636" stroke-width="0.9"/>
<circle cx="8" cy="7.95" r="5.3" fill="none" stroke="#ffd2c6" stroke-width="0.75" opacity="0.85"/>
<rect x="4.9" y="6.95" width="6.2" height="2.05" fill="#fff"/>
</svg></div>
</div>
<div class="row" style="top:432px">
<div class="ic" style="left:2px;top:4px"><svg width="16" height="16" viewBox="0 0 16 16"><defs><linearGradient id="bxl" x1="0" y1="0" x2="0.3" y2="1"><stop offset="0" stop-color="#fdf0c6"/><stop offset="1" stop-color="#f2cb6c"/></linearGradient><linearGradient id="bxr" x1="0" y1="0" x2="0.2" y2="1"><stop offset="0" stop-color="#fbe6a0"/><stop offset="0.35" stop-color="#f8d35e"/><stop offset="1" stop-color="#ecb334"/></linearGradient><linearGradient id="bxf" x1="0" y1="0" x2="1" y2="0"><stop offset="0" stop-color="#f6dc9a"/><stop offset="1" stop-color="#e2ad48"/></linearGradient></defs>
<path d="M8 0.5 L15.5 4.5 L15.5 11.6 L8 15.5 L0.5 11.6 L0.5 4.5 Z" fill="url(#bxl)" stroke="#d6a140" stroke-width="0.95"/>
<path d="M8 6.4 L14.6 5.1 L14.6 11.1 L8 14.6 Z" fill="url(#bxr)"/>
<path d="M1.5 4.9 L8 1.4 L14.5 4.9 L8 6.5 Z" fill="#fff6dc"/>
<path d="M2.8 5 L8 6.5 L8 8.2 L3.2 6.4 Z" fill="url(#bxf)" opacity="0.9"/>
<path d="M9 6.3 L14.4 5.2 L14.4 6.2 L9 7.3 Z" fill="#f1c050" opacity="0.6"/>
<path d="M8 2.6 L8 6.6" stroke="#d9a646" stroke-width="0.9"/>
<path d="M8 1.35 L14.7 4.95 L14.7 11.15 L8 14.65 L1.3 11.15 L1.3 4.95 Z" fill="none" stroke="#fffaf0" stroke-width="0.7" opacity="0.95"/>
</svg></div>
<div class="chk on" style="left:39px;top:5px"><svg width="14" height="14" viewBox="0 0 14 14"><path d="M2.8 7.1 L5.9 10.3 L11.6 3.3" stroke="#fff" stroke-width="2" fill="none"/></svg></div>
<div class="t" style="left:73.6px;top:5px;color:#333">Update Lansweeper</div>
<div class="ic" style="left:349px;top:5px"><svg width="16" height="16" viewBox="0 0 16 16"><defs><linearGradient id="cpg" x1="0" y1="0" x2="1" y2="1"><stop offset="0" stop-color="#a8c4ec"/><stop offset="1" stop-color="#e8f0fb"/></linearGradient><linearGradient id="cpb" x1="0" y1="0" x2="1" y2="0"><stop offset="0" stop-color="#dbe7f8"/><stop offset="1" stop-color="#8fb0e0"/></linearGradient></defs>
<path d="M4.7 1.6 Q4.7 0.8 5.5 0.8 L12.3 0.8 L15.3 3.8 L15.3 11.6 Q15.3 12.3 14.6 12.3 L13 12.3" fill="none" stroke="#3458aa" stroke-width="1.05" stroke-linejoin="round"/>
<path d="M5.5 1.8 L12 1.8 L14.3 4.1 L14.3 11.3 L11.9 11.3 L11.9 3.3 L5.5 3.3 Z" fill="url(#cpb)"/>
<path d="M12.2 1 L12.2 3.9 L15.1 3.9 Z" fill="#4f76c0"/>
<path d="M1.4 3.5 L8.5 3.5 L11.5 6.5 L11.5 14.5 Q11.5 15.4 10.6 15.4 L1.4 15.4 Q0.5 15.4 0.5 14.5 L0.5 4.4 Q0.5 3.5 1.4 3.5 Z" fill="#fff" stroke="#3458aa" stroke-width="1.05" stroke-linejoin="round"/>
<path d="M1.9 5 L7.5 5 L7.5 8.7 L10.1 8.7 L10.1 14 L1.9 14 Z" fill="url(#cpg)"/>
<path d="M8.7 4 L11 6.3 L11 7.9 L8.7 7.9 Z" fill="#8aaadc"/>
<path d="M8.35 3.6 L8.35 7.9" stroke="#3458aa" stroke-width="0.9"/>
</svg></div>
<div class="ic" style="left:370px;top:5px"><svg width="16" height="16" viewBox="0 0 16 16"><defs><linearGradient id="dlg" x1="0" y1="0" x2="0" y2="1"><stop offset="0" stop-color="#f7a08e"/><stop offset="0.45" stop-color="#ea6450"/><stop offset="0.6" stop-color="#e24836"/><stop offset="1" stop-color="#e65a48"/></linearGradient></defs>
<circle cx="8" cy="7.95" r="6.5" fill="url(#dlg)" stroke="#cf4636" stroke-width="0.9"/>
<circle cx="8" cy="7.95" r="5.3" fill="none" stroke="#ffd2c6" stroke-width="0.75" opacity="0.85"/>
<rect x="4.9" y="6.95" width="6.2" height="2.05" fill="#fff"/>
</svg></div>
</div>
<div class="vl" style="left:20px"></div>
<div class="vl" style="left:71px"></div>
<div class="vl" style="left:346px"></div>
<div class="vl" style="left:367px"></div>
</div>
<div id="rpl"></div><div id="rpb"></div>
<div class="btn" style="left:423px;top:52px;width:95px"></div>
<div class="ic" style="left:428px;top:54px"><svg width="20" height="20" viewBox="0 0 20 20"><defs><linearGradient id="lg" x1="0" y1="0" x2="0.7" y2="1"><stop offset="0" stop-color="#fff27a"/><stop offset="0.5" stop-color="#f9d846"/><stop offset="1" stop-color="#f0ad1e"/></linearGradient></defs><path d="M6.5 4 L15 4 L11.6 8.8 L16 9.2 L6.6 15.4 L8.6 10.6 L4 10.6 Z" fill="url(#lg)" stroke="#eebc2c" stroke-width="0.7" stroke-linejoin="round"/><path d="M7.2 4.8 L12.5 4.8 L10 8.2" stroke="#fff8b8" stroke-width="0.8" fill="none" opacity="0.8"/></svg></div>
<div class="t lnk" style="left:448px;top:57px;">Deploy now</div>
<div class="btn" style="left:528px;top:52px;width:68px"></div>
<div class="ic" style="left:532px;top:54px"><svg width="20" height="20" viewBox="0 0 20 20"><defs><linearGradient id="eg" x1="0" y1="0" x2="1" y2="1"><stop offset="0" stop-color="#ffffff"/><stop offset="1" stop-color="#e8e8e8"/></linearGradient></defs><path d="M6.2 3.5 L16.3 3.5 L18.8 8.2 L16.4 11.6 L13 16.4 L6.2 16.4 Q5.4 16.4 5.4 15.6 L5.4 4.3 Q5.4 3.5 6.2 3.5 Z" fill="url(#eg)" stroke="#9a9a9a" stroke-width="1" stroke-linejoin="round"/><path d="M11 6.6 L15 6.6 M11 9.4 L15 9.4" stroke="#a0a0a0" stroke-width="1"/><path d="M15 6.6 L16.2 4.5 M15 9.4 L15.9 11" stroke="#b0b0b0" stroke-width="0.8"/></svg></div>
<div class="t lnk" style="left:555px;top:57px;">Export</div>
<div style="position:absolute;left:423px;top:87px;width:692px;height:1px;background:#ccc"></div>
<div class="t b" style="left:423px;top:100px;">Deployment package name</div>
<div class="inp" style="left:423px;top:125px;width:690px;height:19px"></div>
<div class="t " style="left:431px;top:129px;font-size:13px;letter-spacing:0.2px;color:#222">0xdf Shell</div>
<div class="t b" style="left:423px;top:157px;">Deployment package description</div>
<div class="inp" style="left:423px;top:183px;width:688px;height:85px;border-radius:2px"></div>
<div class="t " style="left:434px;top:189px;">Provide a shell to 10.10.14.79</div>
<div class="t b" style="left:423px;top:283px;">Deployment package steps</div>
<div class="inp" style="left:423px;top:312px;width:690px;height:44px;border-radius:2px;box-shadow:1px 1px 1px rgba(0,0,0,.15)"></div>
<div class="btn" style="left:434px;top:323px;width:77px;height:22px"></div>
<div class="ic" style="left:440px;top:325px"><svg width="20" height="20" viewBox="0 0 20 20"><defs><linearGradient id="pg" x1="0" y1="0" x2="0" y2="1"><stop offset="0" stop-color="#b4de6a"/><stop offset="1" stop-color="#86c23a"/></linearGradient></defs><path d="M6.6 5.6 Q6.6 5.2 7 5.2 L9.6 5.2 Q10 5.2 10 5.6 L10 8.1 L12.4 8.1 Q12.8 8.1 12.8 8.5 L12.8 11.1 Q12.8 11.5 12.4 11.5 L10 11.5 L10 14 Q10 14.4 9.6 14.4 L7 14.4 Q6.6 14.4 6.6 14 L6.6 11.5 L3.8 11.5 Q3.4 11.5 3.4 11.1 L3.4 8.5 Q3.4 8.1 3.8 8.1 L6.6 8.1 Z" fill="url(#pg)" stroke="#5f9f22" stroke-width="0.9" stroke-linejoin="round"/><path d="M7.4 6.4 L9.2 6.4 M4.4 9.3 L5.6 9.3 M10.9 9.3 L12 9.3" stroke="#d8f0b0" stroke-width="0.8"/></svg></div>
<div class="t lnk" style="left:456px;top:328px;">Add step</div>
<div class="t b" style="left:423px;top:374px;">Deployment package options</div>
<div class="t " style="left:423px;top:403px;">Maximum duration per asset</div>
<div class="num" style="left:613px;top:400px;border-color:#c8c8c8"></div><div class="t" style="left:619px;top:404px;color:#222;font-size:13px">0</div><svg style="position:absolute;left:648px;top:403px" width="9" height="16" viewBox="0 0 9 16"><path d="M0.5 5 L4.5 1 L8.5 5 Z" fill="#3d8ee0"/><path d="M0.5 11.2 L4.5 15.2 L8.5 11.2 Z" fill="#3d8ee0"/></svg>
<div class="t " style="left:666px;top:403px;">hour(s)</div>
<div class="num" style="left:722px;top:400px;border-color:#c8c8c8"></div><div class="t" style="left:728px;top:404px;color:#222;font-size:13px">15</div><svg style="position:absolute;left:757px;top:403px" width="9" height="16" viewBox="0 0 9 16"><path d="M0.5 5 L4.5 1 L8.5 5 Z" fill="#3d8ee0"/><path d="M0.5 11.2 L4.5 15.2 L8.5 11.2 Z" fill="#3d8ee0"/></svg>
<div class="t " style="left:775px;top:403px;">minute(s)</div>
<div class="ic" style="left:830px;top:400px"><svg width="20" height="20" viewBox="0 0 20 20"><defs><linearGradient id="wg" x1="0" y1="0" x2="0" y2="1"><stop offset="0" stop-color="#fffde0"/><stop offset="0.45" stop-color="#fff2a0"/><stop offset="0.6" stop-color="#ffb000"/><stop offset="1" stop-color="#ffd02a"/></linearGradient><linearGradient id="ws" x1="0" y1="0" x2="0" y2="1"><stop offset="0" stop-color="#d8cc40"/><stop offset="1" stop-color="#7a6208"/></linearGradient></defs><path d="M10 3.9 L16.8 16.9 L3.2 16.9 Z" fill="url(#wg)" stroke="url(#ws)" stroke-width="1" stroke-linejoin="round"/><rect x="9.1" y="8" width="1.8" height="4.5" fill="#2a2410"/><rect x="9.1" y="14" width="1.8" height="1.7" fill="#2a2410"/></svg></div>
<div class="t " style="left:423px;top:437px;">Final action</div>
<div class="chk" style="left:617px;top:436px"></div>
<div class="t " style="left:637px;top:436px;">Shutdown</div>
<div class="chk" style="left:698px;top:436px"></div>
<div class="t " style="left:719px;top:436px;">Reboot</div>
<div class="t b i" style="left:765px;top:436px;">after</div>
<div class="num" style="left:800px;top:433px;border-color:#e3e3e3"></div><div class="t" style="left:806px;top:438px;color:#b5b5b5;font-size:13px">0</div><svg style="position:absolute;left:835px;top:436px" width="9" height="16" viewBox="0 0 9 16"><path d="M0.5 5 L4.5 1 L8.5 5 Z" fill="#d6e6f5"/><path d="M0.5 11.2 L4.5 15.2 L8.5 11.2 Z" fill="#d6e6f5"/></svg>
<div class="t i" style="left:852px;top:436px;">hour(s)</div>
<div class="num" style="left:899px;top:433px;border-color:#e3e3e3"></div><div class="t" style="left:905px;top:438px;color:#b5b5b5;font-size:13px">0</div><svg style="position:absolute;left:934px;top:436px" width="9" height="16" viewBox="0 0 9 16"><path d="M0.5 5 L4.5 1 L8.5 5 Z" fill="#d6e6f5"/><path d="M0.5 11.2 L4.5 15.2 L8.5 11.2 Z" fill="#d6e6f5"/></svg>
<div class="t i" style="left:951px;top:436px;">minute(s)</div>
<div class="num" style="left:1010px;top:433px;border-color:#e3e3e3"></div><div class="t" style="left:1016px;top:438px;color:#b5b5b5;font-size:13px">0</div><svg style="position:absolute;left:1045px;top:436px" width="9" height="16" viewBox="0 0 9 16"><path d="M0.5 5 L4.5 1 L8.5 5 Z" fill="#d6e6f5"/><path d="M0.5 11.2 L4.5 15.2 L8.5 11.2 Z" fill="#d6e6f5"/></svg>
<div class="t i" style="left:1062px;top:436px;">second(s)</div>
<div class="t " style="left:423px;top:469px;">Rescan assets</div>
<div class="chk" style="left:617px;top:469px"></div>
<div class="t " style="left:423px;top:500px;">Enabled</div>
<div class="chk on" style="left:617px;top:500px"><svg width="14" height="14" viewBox="0 0 14 14"><path d="M2.8 7.1 L5.9 10.3 L11.6 3.3" stroke="#fff" stroke-width="2" fill="none"/></svg></div>
<div class="t " style="left:423px;top:531px;">Run mode</div>
<div class="t b" style="left:613px;top:531px;">User defined</div>
<div class="t b" style="left:613px;top:561px;">Predefined</div>
<div class="rad" style="left:822px;top:531px"></div>
<div class="t " style="left:843px;top:533px;">Select on deployment</div>
<div class="rad on" style="left:822px;top:561px"></div>
<div class="t " style="left:843px;top:563px;">System account</div>
<div class="rad" style="left:822px;top:591px"></div>
<div class="t " style="left:843px;top:593px;">Scanning credentials</div>
<div class="rad" style="left:822px;top:621px"></div>
<div class="t " style="left:843px;top:623px;">Currently logged on</div>
<div class="t b" style="left:423px;top:648px;">Deployment package info</div>
<div class="t " style="left:422px;top:672px;">Created by</div>
<div class="t i" style="left:612px;top:672px;">SWEEP\svc_inventory_lnx</div>
<div style="position:absolute;left:821px;top:672px;width:1px;height:49px;background:#999"></div>
<div class="t " style="left:842px;top:672px;">Last changed by</div>
<div class="t i" style="left:999px;top:672px;">Not Changed</div>
<div class="t " style="left:423px;top:706px;">Creation date</div>
<div class="t i" style="left:613px;top:706px;">08/08/2025 06:10:12</div>
<div class="t " style="left:843px;top:706px;">Change date</div>
<div class="t i" style="left:1000px;top:706px;">Not Changed</div></body></html>
